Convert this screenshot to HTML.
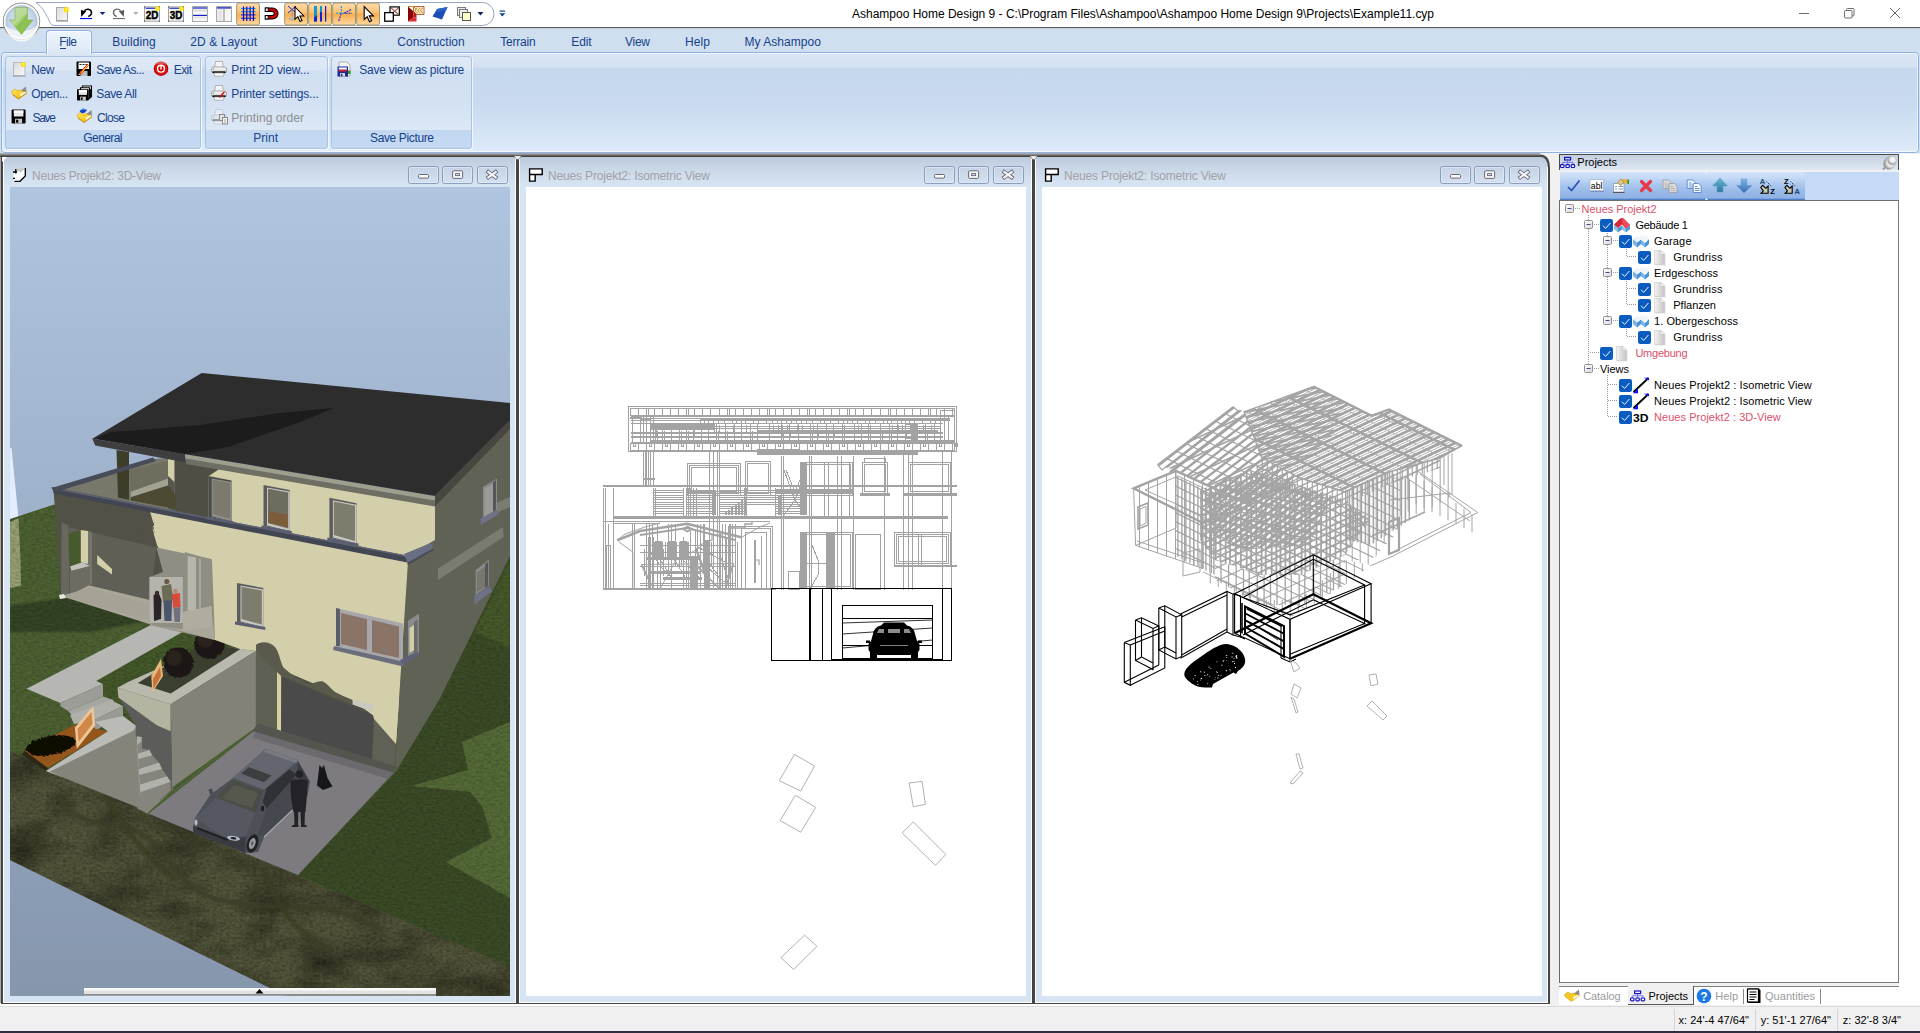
<!DOCTYPE html>
<html><head><meta charset="utf-8"><title>Ashampoo Home Design 9</title>
<style>
html,body{margin:0;padding:0;width:1920px;height:1033px;overflow:hidden;background:#f0f0f0;
font-family:"Liberation Sans",sans-serif;}
div{box-sizing:border-box;}
.a{position:absolute;}
.t{position:absolute;white-space:pre;}
svg{position:absolute;overflow:visible;}

</style></head>
<body>
<svg width="1920" height="153" style="left:0;top:0" viewBox="0 0 1920 153">
<defs>
<linearGradient id="qhl" x1="0" y1="0" x2="0" y2="1"><stop offset="0" stop-color="#fcdcb0"/><stop offset=".45" stop-color="#fbc070"/><stop offset=".5" stop-color="#f9ad50"/><stop offset="1" stop-color="#fdd9a0"/></linearGradient>
<radialGradient id="orb" cx=".5" cy=".5" r=".5"><stop offset="0" stop-color="#dfe9f6"/><stop offset=".7" stop-color="#c4d4ea"/><stop offset=".88" stop-color="#aebfd8"/><stop offset=".95" stop-color="#f4f6f8"/><stop offset="1" stop-color="#9a9a9a"/></radialGradient>
<linearGradient id="orbhi" x1="0" y1="0" x2="0" y2="1"><stop offset="0" stop-color="#fff" stop-opacity=".9"/><stop offset="1" stop-color="#fff" stop-opacity="0"/></linearGradient>
<linearGradient id="garr" x1="0" y1="0" x2="1" y2="1"><stop offset="0" stop-color="#b6d98e"/><stop offset=".5" stop-color="#a5d07a"/><stop offset=".5" stop-color="#8cc152"/><stop offset="1" stop-color="#8fc456"/></linearGradient>
<linearGradient id="pg" x1="0" y1="0" x2="1" y2="1"><stop offset="0" stop-color="#dcdcdc"/><stop offset="1" stop-color="#f6f6f6"/></linearGradient>
</defs>
<rect x="0" y="0" width="1920" height="27" fill="#fff"/>
<rect x="0" y="27" width="1920" height="1.4" fill="#5a5a5a"/>
<rect x="0" y="28.4" width="1920" height="124.600" fill="#d0dff0"/>
<path d="M36 2.5 H482.5 a11.5 11.5 0 0 1 0 23 H54 C48 25.5 49 12 36 2.5 Z" fill="#fff" stroke="#9aa7c4" stroke-width="1"/>
<circle cx="21.5" cy="21.3" r="18.6" fill="url(#orb)"/>
<circle cx="21.5" cy="21.3" r="18.2" fill="none" stroke="#8e8e8e" stroke-width=".9"/><circle cx="21.5" cy="21.3" r="16.800" fill="none" stroke="#fff" stroke-width="1.600" opacity=".85"/><path d="M6 26 a15.500 15.500 0 0 0 31 0 a20 14 0 0 1 -31 0z" fill="#fff" opacity=".75"/>
<path d="M15 7.5 H27.5 V20 H33 L21.5 34.5 L9.5 20 H15 Z" fill="url(#garr)" stroke="#7fae4e" stroke-width=".6"/>
<path d="M15.5 8 H27 V12 L13 26 L10.5 20.5 H15.5Z" fill="#fff" opacity=".18"/>
<rect x="236.7" y="3" width="22.800" height="22" rx="2.200" fill="url(#qhl)" stroke="#a09468"/>
<rect x="284.7" y="3" width="22.800" height="22" rx="2.200" fill="url(#qhl)" stroke="#a09468"/>
<rect x="308.7" y="3" width="22.800" height="22" rx="2.200" fill="url(#qhl)" stroke="#a09468"/>
<rect x="332.7" y="3" width="22.800" height="22" rx="2.200" fill="url(#qhl)" stroke="#a09468"/>
<rect x="356.7" y="3" width="22.800" height="22" rx="2.200" fill="url(#qhl)" stroke="#a09468"/>
<g transform="translate(56,6)"><rect x=".5" y="1.5" width="11" height="13" fill="url(#pg)" stroke="#a9a9a9"/><path d="M0 15.2H12" stroke="#8f8f8f" stroke-width=".8"/><circle cx="10.3" cy="3.700" r="2.6" fill="#ffe100"/><circle cx="10.6" cy="3.300" r=".9" fill="#fff6a0"/></g>
<path d="M84.500 10.600 C87.500 7.800 91.800 9.500 91.500 13 C91.300 15 90 16 88.300 16.500" fill="none" stroke="#000" stroke-width="1.500"/><path d="M80.900 10 L86.200 11.200 L81.200 16.900 Z" fill="#000"/><rect x="80" y="18" width="12" height="1.100" fill="#0000ff"/>
<path d="M99.700 12.100 h5.600 l-2.800 3z" fill="#0a2a8a"/>
<path d="M120.500 10.600 C117.500 7.800 113.200 9.500 113.500 13 C113.700 15 115 16 116.700 16.500" fill="none" stroke="#6a6a6a" stroke-width="1.400"/><path d="M124.100 10 L118.800 11.200 L123.800 16.900 Z" fill="#5a5a5a"/><rect x="113" y="18" width="12" height="1.100" fill="#6e6e6e"/>
<path d="M133 12.100 h5.600 l-2.800 3z" fill="#b0b0b0"/>
<g transform="translate(144,6)"><rect x=".5" y=".9" width="15" height="14.300" fill="#f4f4f4" stroke="#a4a4a4"/><rect x="0" y=".4" width="1.200" height="1.200" fill="#555"/><rect x="14.800" y=".4" width="1.200" height="1.200" fill="#555"/><rect x="0" y="14.500" width="1.200" height="1.200" fill="#555"/><rect x="14.800" y="14.500" width="1.200" height="1.200" fill="#555"/><rect x="1.500" y="1.700" width="10" height="1.100" fill="#1428c8"/><circle cx="13.500" cy="2.700" r="2.400" fill="#ffe100"/><circle cx="13.700" cy="2.300" r=".8" fill="#fff8a0"/><text x="8.100" y="12.900" font-family="Liberation Sans,sans-serif" font-weight="bold" font-size="10.600" text-anchor="middle" fill="#000" stroke="#000" stroke-width=".45" textLength="12.600" lengthAdjust="spacingAndGlyphs">2D</text></g>
<g transform="translate(168,6)"><rect x=".5" y=".9" width="15" height="14.300" fill="#f4f4f4" stroke="#a4a4a4"/><rect x="0" y=".4" width="1.200" height="1.200" fill="#555"/><rect x="14.800" y=".4" width="1.200" height="1.200" fill="#555"/><rect x="0" y="14.500" width="1.200" height="1.200" fill="#555"/><rect x="14.800" y="14.500" width="1.200" height="1.200" fill="#555"/><rect x="1.500" y="1.700" width="10" height="1.100" fill="#1428c8"/><circle cx="13.500" cy="2.700" r="2.400" fill="#ffe100"/><circle cx="13.700" cy="2.300" r=".8" fill="#fff8a0"/><text x="8.100" y="12.900" font-family="Liberation Sans,sans-serif" font-weight="bold" font-size="10.600" text-anchor="middle" fill="#000" stroke="#000" stroke-width=".45" textLength="12.600" lengthAdjust="spacingAndGlyphs">3D</text></g>
<g transform="translate(192,6)"><rect x=".5" y=".5" width="15" height="15" fill="#f6f6f6" stroke="#a8a8a8"/><rect x="1" y="1.400" width="14" height="1.200" fill="#1420c0"/><rect x="1" y="8.800" width="14" height="1.200" fill="#1420c0"/><rect x="1" y="3.5" width="14" height="2" fill="#dcdcdc"/><rect x="1" y="10.5" width="14" height="2" fill="#e4e4e4"/></g>
<g transform="translate(216,6)"><rect x=".5" y=".5" width="15" height="15" fill="#f6f6f6" stroke="#a8a8a8"/><rect x="1" y="1.2" width="14" height="1.4" fill="#1f2fbf"/><rect x="7.4" y="3" width="1.2" height="12.5" fill="#9a9a9a"/><rect x="1.5" y="3" width="5" height="12" fill="#e6e6e6"/></g>
<g><path d="M241 8.5H255.500" stroke="#0a96d8" stroke-width="1.200"/><path d="M241 11.7H255.500" stroke="#0a96d8" stroke-width="1.200"/><path d="M241 14.9H255.500" stroke="#1a3ad8" stroke-width="1.200"/><path d="M241 18.3H255.500" stroke="#1a3ad8" stroke-width="1.200"/><path d="M243.5 6.500V21" stroke="#0a0ac8" stroke-width="1.200"/><path d="M246.8 6.500V21" stroke="#0a0ac8" stroke-width="1.200"/><path d="M250.1 6.500V21" stroke="#0a0ac8" stroke-width="1.200"/><path d="M253.4 6.500V21" stroke="#0a0ac8" stroke-width="1.200"/></g>
<g transform="translate(264,6)"><path d="M1.5 2 H8.5 a5.5 5.5 0 0 1 0 11 H1.5 V9.6 H8.2 a2 2 0 0 0 0 -4.2 H1.5 Z" fill="#d40000" stroke="#000" stroke-width="1.1"/><rect x="1.2" y="2" width="3" height="3.4" fill="#fff" stroke="#000" stroke-width="1"/><rect x="1.2" y="9.6" width="3" height="3.4" fill="#fff" stroke="#000" stroke-width="1"/></g>
<g><path d="M288 6 L296 13 M296 6 L288 13" stroke="#1a1ad0" stroke-width="1"/><path d="M292 8 V21 M289 19h6" stroke="#8a8a8a" stroke-width="1"/><path d="M291 14 l3 6 h-4z" fill="#b8b8b8"/></g>
<path transform="translate(295,7) scale(0.95)" d="M0 0 V13 L3 10.2 L5.3 15.2 L7.4 14.2 L5.1 9.4 H9.2 Z" fill="#fff" stroke="#000" stroke-width="1.1" stroke-linejoin="miter"/>
<g><rect x="314" y="6" width="2.900" height="15.600" fill="#0a96d8"/><path d="M314 21.600 v-4 l2.900 -2.600 v6.600z" fill="#1420d0"/><rect x="320" y="6" width="2" height="15.600" fill="#1420d0"/><rect x="320" y="6" width="2" height="6" fill="#0a96d8"/><rect x="325" y="6" width="1.200" height="15.600" fill="#1420d0"/></g>
<g fill="none" stroke-width="1.100" stroke-dasharray="2 1"><path d="M341.300 6 V13" stroke="#0a96d8"/><path d="M336 13.300 H345" stroke="#0a96d8"/><path d="M341.300 13.500 L338.500 21.500" stroke="#1420d0"/><path d="M344 13.300 L351 9.500" stroke="#1420d0"/><path d="M345.500 13.300 H352" stroke="#1420d0"/></g>
<path transform="translate(364.2,6.5) scale(1.0)" d="M0 0 V13 L3 10.2 L5.3 15.2 L7.4 14.2 L5.1 9.4 H9.2 Z" fill="#fff" stroke="#000" stroke-width="1.1" stroke-linejoin="miter"/>
<g><rect x="390" y="6.900" width="9.300" height="8.300" fill="#fff" stroke="#000" stroke-width="1.200"/><path d="M391 7.800 l7.500 6.500 M398.500 7.800 l-7.500 6.500" stroke="#a0503a" stroke-width="1.100"/><rect x="384.700" y="12.600" width="8.600" height="8.600" fill="#fff" stroke="#000" stroke-width="1.300"/></g>
<g><path d="M413.500 6.500 H424 V14.500 H416.500 L413.500 11.500Z" fill="#fff6e8" stroke="#b05030" stroke-width=".9"/><path d="M408 6.500 H413.500 L416.500 9.500" fill="none" stroke="#c89020" stroke-width="1"/><path d="M417.500 7.500 l-2.500 3 2.500 3 M420.300 7.500 l-2.500 3 2.500 3 M423 7.500 l-2.500 3 2.500 3" stroke="#d09820" stroke-width="1.100" fill="none"/><path d="M408 6.500 L413.500 11.500 V17.500 L408 21.500Z" fill="#8c0000"/><path d="M408 21.500 L413.500 17.500 H416.500 V21.500Z" fill="#d83030"/><path d="M413.500 11.500 L416.500 14.500 V17.500 H413.500Z" fill="#c01818"/></g>
<path d="M437 9 L447.5 7 L442 19.5 L432.5 16.5 Z" fill="#1c4fb0"/><path d="M437 9 L447.5 7 L446 10.5 L436 12Z" fill="#2a63c8"/>
<g stroke="#7a7a7a" stroke-width="1"><rect x="457.5" y="7.5" width="8" height="8" fill="#e8e8e8"/><rect x="459.5" y="9.5" width="8" height="8" fill="#efefef"/><rect x="462.5" y="12.5" width="8" height="8" fill="#ffffc8" stroke="#555"/></g>
<path d="M477.500 12 h6 l-3 3.400z" fill="#0a246a"/>
<rect x="499.500" y="10.5" width="5.500" height="1.2" fill="#15428b"/><path d="M499.3 13.3 h6 l-3 3.2z" fill="#15428b"/>
<g stroke="#6b6b6b" stroke-width="1" fill="none"><path d="M1799 13.5 H1809"/><rect x="1844.500" y="10.500" width="7.500" height="7.500" rx="1"/><path d="M1846.500 10.500 V9.5 a1 1 0 0 1 1 -1 H1853 a1 1 0 0 1 1 1 V15 a1 1 0 0 1 -1 1 H1852"/><path d="M1890 8 L1900 18 M1900 8 L1890 18"/></g>
</svg><div class="t" style="left:852.0px;top:6.3px;font-size:12px;line-height:16px;letter-spacing:-0.007px;color:#000;">Ashampoo Home Design 9 - C:\Program Files\Ashampoo\Ashampoo Home Design 9\Projects\Example11.cyp</div>
<div class="a" style="left:0.5px;top:52px;width:1918px;height:101px;border:1px solid #8db2e3;border-radius:4px;background:linear-gradient(#dbe6f4 0px,#d4e1f2 14px,#c6d8ee 15px,#c9daf0 50px,#dbe9f8 96px,#e6f0fb 100px);"></div>
<div class="a" style="left:1.5px;top:53px;width:1916px;height:99px;border:1px solid rgba(255,255,255,.55);border-radius:3px;"></div>
<div class="a" style="left:45.500px;top:29.5px;width:46px;height:24px;border:1px solid #8db2e3;border-bottom:none;border-radius:4px 4px 0 0;background:linear-gradient(#eef4fb,#e4edf8 60%,#dbe6f4);box-shadow:inset 1px 1px 0 rgba(255,255,255,.8),inset -1px 0 0 rgba(255,255,255,.8);"></div>
<div class="t" style="left:59.3px;top:33.6px;font-size:12px;line-height:16px;letter-spacing:-0.545px;color:#15428b;">File</div>
<div class="t" style="left:112.3px;top:33.6px;font-size:12px;line-height:16px;letter-spacing:0.100px;color:#15428b;">Building</div>
<div class="t" style="left:190.3px;top:33.6px;font-size:12px;line-height:16px;letter-spacing:0.066px;color:#15428b;">2D &amp; Layout</div>
<div class="t" style="left:292.3px;top:33.6px;font-size:12px;line-height:16px;letter-spacing:-0.091px;color:#15428b;">3D Functions</div>
<div class="t" style="left:397.3px;top:33.6px;font-size:12px;line-height:16px;letter-spacing:0.003px;color:#15428b;">Construction</div>
<div class="t" style="left:500.3px;top:33.6px;font-size:12px;line-height:16px;letter-spacing:-0.213px;color:#15428b;">Terrain</div>
<div class="t" style="left:571.3px;top:33.6px;font-size:12px;line-height:16px;letter-spacing:-0.159px;color:#15428b;">Edit</div>
<div class="t" style="left:625.1px;top:33.6px;font-size:12px;line-height:16px;letter-spacing:-0.331px;color:#15428b;">View</div>
<div class="t" style="left:685.1px;top:33.6px;font-size:12px;line-height:16px;letter-spacing:0.040px;color:#15428b;">Help</div>
<div class="t" style="left:744.4px;top:33.6px;font-size:12px;line-height:16px;letter-spacing:0.046px;color:#15428b;">My Ashampoo</div>
<div class="a" style="left:59.500px;top:48px;width:6.500px;height:1px;background:#15428b"></div>
<div class="a" style="left:4.5px;top:55.5px;width:196.0px;height:93px;border:1px solid #a9c3e3;border-radius:3px;background:linear-gradient(#e0eaf6 0px,#dbe6f4 13px,#d1dff2 15px,#d3e1f3 45px,#dce8f6 73px,#c2d8f1 73.500px,#c4daf3 93px);box-shadow:1px 1px 0 rgba(255,255,255,.7);"></div><div class="t" style="left:83.3px;top:130.2px;font-size:12px;line-height:16px;letter-spacing:-0.582px;color:#15428b;">General</div>
<div class="a" style="left:204.5px;top:55.5px;width:123.0px;height:93px;border:1px solid #a9c3e3;border-radius:3px;background:linear-gradient(#e0eaf6 0px,#dbe6f4 13px,#d1dff2 15px,#d3e1f3 45px,#dce8f6 73px,#c2d8f1 73.500px,#c4daf3 93px);box-shadow:1px 1px 0 rgba(255,255,255,.7);"></div><div class="t" style="left:253.3px;top:130.2px;font-size:12px;line-height:16px;letter-spacing:0.007px;color:#15428b;">Print</div>
<div class="a" style="left:331.3px;top:55.5px;width:141.2px;height:93px;border:1px solid #a9c3e3;border-radius:3px;background:linear-gradient(#e0eaf6 0px,#dbe6f4 13px,#d1dff2 15px,#d3e1f3 45px,#dce8f6 73px,#c2d8f1 73.500px,#c4daf3 93px);box-shadow:1px 1px 0 rgba(255,255,255,.7);"></div><div class="t" style="left:370.0px;top:130.2px;font-size:12px;line-height:16px;letter-spacing:-0.367px;color:#15428b;">Save Picture</div>
<div class="t" style="left:31.3px;top:61.5px;font-size:12px;line-height:16px;letter-spacing:-0.403px;color:#15428b;">New</div>
<div class="t" style="left:96.3px;top:61.5px;font-size:12px;line-height:16px;letter-spacing:-0.648px;color:#15428b;">Save As...</div>
<div class="t" style="left:173.8px;top:61.5px;font-size:12px;line-height:16px;letter-spacing:-0.601px;color:#15428b;">Exit</div>
<div class="t" style="left:231.3px;top:61.5px;font-size:12px;line-height:16px;letter-spacing:-0.122px;color:#15428b;">Print 2D view...</div>
<div class="t" style="left:359.3px;top:61.5px;font-size:12px;line-height:16px;letter-spacing:-0.266px;color:#15428b;">Save view as picture</div>
<div class="t" style="left:31.3px;top:85.5px;font-size:12px;line-height:16px;letter-spacing:-0.443px;color:#15428b;">Open...</div>
<div class="t" style="left:96.3px;top:85.5px;font-size:12px;line-height:16px;letter-spacing:-0.408px;color:#15428b;">Save All</div>
<div class="t" style="left:231.3px;top:85.5px;font-size:12px;line-height:16px;letter-spacing:-0.141px;color:#15428b;">Printer settings...</div>
<div class="t" style="left:32.5px;top:109.5px;font-size:12px;line-height:16px;letter-spacing:-1.284px;color:#15428b;">Save</div>
<div class="t" style="left:97.0px;top:109.5px;font-size:12px;line-height:16px;letter-spacing:-0.670px;color:#15428b;">Close</div>
<div class="t" style="left:231.3px;top:109.5px;font-size:12px;line-height:16px;letter-spacing:0.051px;color:#8d8d8d;">Printing order</div>
<svg width="480" height="100" style="left:0;top:52px" viewBox="0 52 480 100">
<defs><linearGradient id="pg2" x1="0" y1="0" x2="1" y2="1"><stop offset="0" stop-color="#d8d8d8"/><stop offset="1" stop-color="#fafafa"/></linearGradient>
<linearGradient id="fol" x1="0" y1="0" x2="1" y2="1"><stop offset="0" stop-color="#ffe45a"/><stop offset="1" stop-color="#f2b800"/></linearGradient>
<linearGradient id="prn" x1="0" y1="0" x2="0" y2="1"><stop offset="0" stop-color="#fdfdfd"/><stop offset="1" stop-color="#cfcfcf"/></linearGradient>
</defs>
<g transform="translate(13,61.5)"><rect x=".5" y="1" width="11.500" height="13" fill="url(#pg2)" stroke="#b0b0b0" stroke-width=".8"/><path d="M0 14.600H12.500" stroke="#9a9a9a"/><circle cx="10.300" cy="3" r="2.500" fill="#ffe100"/><circle cx="10.600" cy="2.600" r=".9" fill="#fff8b0"/></g>
<g transform="translate(11,86)"><path d="M8 6 L15 0.500 L15.500 6.500 L9 11Z" fill="#8a8a8a"/><path d="M0.500 5.500 L4 3 L7 5 L9 4 L15.500 6.500 L7.500 12.500 L1.500 8Z" fill="url(#fol)" stroke="#c89600" stroke-width=".5"/><path d="M7.500 12.500 L15.500 6.500 L15.500 7.800 L7.500 13.500 L1.500 9 V8Z" fill="#c49000"/><path d="M9 8 L14.500 5.500 L14.800 7 L9.500 10.500Z" fill="#fff" opacity=".85"/></g>
<g transform="translate(11.6,109.5) scale(1.000,1.000)"><rect x="0" y="0" width="14" height="14" rx="1" fill="#000"/><rect x="2.200" y="1" width="9.600" height="6" fill="#e8e8e8"/><rect x="2.200" y="1" width="9.600" height="2.500" fill="#fff"/><rect x="3.500" y="9.200" width="7" height="4.800" fill="#c8c8c8"/><rect x="4.500" y="10.200" width="2.200" height="3" fill="#000"/></g>
<g transform="translate(76.5,61.5)"><rect x="0" y="0" width="14.500" height="14.500" rx="1" fill="#000"/><rect x="2" y="1" width="10.500" height="6.500" fill="#fff"/><path d="M3 3h2M6 3h2M9 3h2" stroke="#000" stroke-width=".9"/><rect x="4" y="9.500" width="7" height="5" fill="#bdbdbd"/><path d="M2.500 12 L10.500 2.500 L12.300 4 L4.500 13.200Z" fill="#e01010"/><path d="M3.800 11.500 L10.800 3.200 L11.600 3.900 L4.600 12.200Z" fill="#ffd21c"/><path d="M2 13.500 L2.500 12 L4.500 13.200Z" fill="#f4e0b0"/></g>
<g><path d="M82.500 86 h9 v10.500 h-9z" fill="#fff" stroke="#000" stroke-width="1.100"/><path d="M80.500 87.800 h9 v10.500 h-9z" fill="#fff" stroke="#000" stroke-width="1.100"/><path d="M89 99.500 l3 -2.500 v-9 l-3 2z" fill="#000"/></g>
<g transform="translate(77,89.3) scale(0.843,0.800)"><rect x="0" y="0" width="14" height="14" rx="1" fill="#000"/><rect x="2.200" y="1" width="9.600" height="6" fill="#e8e8e8"/><rect x="2.200" y="1" width="9.600" height="2.500" fill="#fff"/><rect x="3.500" y="9.200" width="7" height="4.800" fill="#c8c8c8"/><rect x="4.500" y="10.200" width="2.200" height="3" fill="#000"/></g>
<path d="M79.500 111 l3.500 -2.500 4 1.500 -2 2.500 -3.500 1z" fill="#1a3fd0"/><path d="M81 109.800 l2.500 -1.300 3.500 1.500z" fill="#3aa8e0"/>
<g transform="translate(76.5,109.5)"><path d="M8 6 L15 0.500 L15.500 6.500 L9 11Z" fill="#8a8a8a"/><path d="M0.500 5.500 L4 3 L7 5 L9 4 L15.500 6.500 L7.500 12.500 L1.500 8Z" fill="url(#fol)" stroke="#c89600" stroke-width=".5"/><path d="M7.500 12.500 L15.500 6.500 L15.500 7.800 L7.500 13.500 L1.500 9 V8Z" fill="#c49000"/><path d="M9 8 L14.500 5.500 L14.800 7 L9.500 10.500Z" fill="#fff" opacity=".85"/></g>
<g><circle cx="161" cy="68.700" r="7.300" fill="#c80000"/><circle cx="161" cy="68.700" r="6" fill="#e01818"/><circle cx="161" cy="68.700" r="4.100" fill="#fff"/><circle cx="161" cy="68.700" r="2.700" fill="#d80000"/><rect x="160.300" y="65.500" width="1.400" height="4" fill="#fff"/><path d="M155 65 a7 7 0 0 1 12 0 a9 6 0 0 0 -12 0z" fill="#fff" opacity=".35"/></g>
<g transform="translate(211,61)"><path d="M4.500 0.500 h7 l.8 6 h-8.600z" fill="#f4f4f4" stroke="#9a9a9a" stroke-width=".7"/><rect x=".5" y="6" width="15" height="6" rx="2.200" fill="url(#prn)" stroke="#8a8a8a" stroke-width=".8"/><rect x="1.500" y="10.300" width="13" height="1.700" fill="#111"/><path d="M3 12 h10 l-.5 3.200 h-9z" fill="#fafafa" stroke="#9a9a9a" stroke-width=".7"/><rect x="2" y="7.600" width="1.200" height="1" fill="#3a3"/></g>
<g transform="translate(211,85)"><path d="M4.500 0.500 h7 l.8 6 h-8.600z" fill="#f4f4f4" stroke="#9a9a9a" stroke-width=".7"/><rect x=".5" y="6" width="15" height="6" rx="2.200" fill="url(#prn)" stroke="#8a8a8a" stroke-width=".8"/><rect x="1.500" y="10.300" width="13" height="1.700" fill="#111"/><path d="M3 12 h10 l-.5 3.200 h-9z" fill="#fafafa" stroke="#9a9a9a" stroke-width=".7"/><rect x="2" y="7.600" width="1.200" height="1" fill="#3a3"/></g>
<path d="M219 97 L224 91 L225.200 92 L220 98Z" fill="#d01010"/><path d="M221 91 l3 -1 1 1.500z" fill="#e8d8c0"/>
<g transform="translate(211,109)" opacity=".45"><path d="M4.500 0.500 h7 l.8 6 h-8.600z" fill="#f4f4f4" stroke="#9a9a9a" stroke-width=".7"/><rect x=".5" y="6" width="15" height="6" rx="2.200" fill="url(#prn)" stroke="#8a8a8a" stroke-width=".8"/><rect x="1.500" y="10.300" width="13" height="1.700" fill="#111"/><path d="M3 12 h10 l-.5 3.200 h-9z" fill="#fafafa" stroke="#9a9a9a" stroke-width=".7"/><rect x="2" y="7.600" width="1.200" height="1" fill="#3a3"/></g>
<g stroke="#8a8a8a" stroke-width="1" fill="#e4e4e4"><rect x="219.500" y="114.500" width="5" height="6"/><rect x="222.500" y="117.500" width="5" height="6.500" fill="#f4f4f4"/><path d="M224 120h2M224 122h2" stroke-width=".8"/></g>
<g transform="translate(337.500,61.500)"><path d="M1.500 .5 h8 l3 3 v11 h-11z" fill="#f4f4f4" stroke="#a0a0a0" stroke-width=".8"/><rect x="0" y="5" width="10.500" height="10" fill="#1a2a9a"/><rect x="1.300" y="6" width="8" height="2.200" fill="#fff"/><rect x="1.300" y="8.200" width="8" height="1.800" fill="#e02020"/><rect x="2.500" y="11.500" width="5" height="3.500" fill="#dcdcdc"/><rect x="3.300" y="12.300" width="1.600" height="2.700" fill="#1a2a9a"/><rect x="10.500" y="9" width="2.500" height="3.500" fill="#2a9a2a"/></g>
</svg>
<div class="a" style="left:0;top:152.8px;width:1543px;height:4px;background:linear-gradient(#b9b9b9,#8a8a8a 40%,#4a4a4a 75%,#3c3c3c);"></div>
<div class="a" style="left:0;top:157px;width:1550px;height:848px;background:#fff;"></div>
<div class="a" style="left:0;top:157px;width:1px;height:846px;background:#a6a6a6;"></div>
<div class="a" style="left:4px;top:157px;width:511px;height:845px;background:linear-gradient(#bccbdc 0px,#c6d4e5 8px,#d3e1f0 24px,#d6e4f3 30px,#d6e4f3 100%);"></div><div class="t" style="left:32.0px;top:168.2px;font-size:12px;line-height:16px;letter-spacing:-0.220px;color:#a3a1a3;">Neues Projekt2: 3D-View</div><div class="a" style="left:408.3px;top:166.2px;width:31px;height:17.5px;border:1px solid #8c9dc0;border-radius:2.5px;background:linear-gradient(#c5d3e5,#d4e1f0);box-shadow:inset 0 0 0 1px rgba(230,238,248,.6);"></div><div class="a" style="left:442.4px;top:166.2px;width:31px;height:17.5px;border:1px solid #8c9dc0;border-radius:2.5px;background:linear-gradient(#c5d3e5,#d4e1f0);box-shadow:inset 0 0 0 1px rgba(230,238,248,.6);"></div><div class="a" style="left:476.5px;top:166.2px;width:31px;height:17.5px;border:1px solid #8c9dc0;border-radius:2.5px;background:linear-gradient(#c5d3e5,#d4e1f0);box-shadow:inset 0 0 0 1px rgba(230,238,248,.6);"></div>
<div class="a" style="left:520px;top:157px;width:511px;height:845px;background:linear-gradient(#bccbdc 0px,#c6d4e5 8px,#d3e1f0 24px,#d6e4f3 30px,#d6e4f3 100%);"></div><div class="t" style="left:548.0px;top:168.2px;font-size:12px;line-height:16px;letter-spacing:-0.156px;color:#a3a1a3;">Neues Projekt2: Isometric View</div><div class="a" style="left:924.3px;top:166.2px;width:31px;height:17.5px;border:1px solid #8c9dc0;border-radius:2.5px;background:linear-gradient(#c5d3e5,#d4e1f0);box-shadow:inset 0 0 0 1px rgba(230,238,248,.6);"></div><div class="a" style="left:958.4px;top:166.2px;width:31px;height:17.5px;border:1px solid #8c9dc0;border-radius:2.5px;background:linear-gradient(#c5d3e5,#d4e1f0);box-shadow:inset 0 0 0 1px rgba(230,238,248,.6);"></div><div class="a" style="left:992.5px;top:166.2px;width:31px;height:17.5px;border:1px solid #8c9dc0;border-radius:2.5px;background:linear-gradient(#c5d3e5,#d4e1f0);box-shadow:inset 0 0 0 1px rgba(230,238,248,.6);"></div>
<div class="a" style="left:1036px;top:157px;width:511px;height:845px;background:linear-gradient(#bccbdc 0px,#c6d4e5 8px,#d3e1f0 24px,#d6e4f3 30px,#d6e4f3 100%);"></div><div class="t" style="left:1064.0px;top:168.2px;font-size:12px;line-height:16px;letter-spacing:-0.156px;color:#a3a1a3;">Neues Projekt2: Isometric View</div><div class="a" style="left:1440.3px;top:166.2px;width:31px;height:17.5px;border:1px solid #8c9dc0;border-radius:2.5px;background:linear-gradient(#c5d3e5,#d4e1f0);box-shadow:inset 0 0 0 1px rgba(230,238,248,.6);"></div><div class="a" style="left:1474.4px;top:166.2px;width:31px;height:17.5px;border:1px solid #8c9dc0;border-radius:2.5px;background:linear-gradient(#c5d3e5,#d4e1f0);box-shadow:inset 0 0 0 1px rgba(230,238,248,.6);"></div><div class="a" style="left:1508.5px;top:166.2px;width:31px;height:17.5px;border:1px solid #8c9dc0;border-radius:2.5px;background:linear-gradient(#c5d3e5,#d4e1f0);box-shadow:inset 0 0 0 1px rgba(230,238,248,.6);"></div>
<div class="a" style="left:1px;top:157px;width:2px;height:847px;background:#454545;"></div>
<div class="a" style="left:516px;top:157px;width:3px;height:847px;background:#454545;"></div>
<div class="a" style="left:1032px;top:157px;width:3px;height:847px;background:#454545;"></div>
<div class="a" style="left:1548px;top:166px;width:2px;height:838px;background:#454545;"></div>
<div class="a" style="left:1px;top:1003px;width:1549px;height:1px;background:#454545;"></div>
<div class="a" style="left:526px;top:187px;width:500px;height:809px;background:#fff;"></div>
<div class="a" style="left:1042px;top:187px;width:500px;height:809px;background:#fff;"></div>
<svg width="1560" height="40" style="left:0;top:153px" viewBox="0 153 1560 40">
<rect x="418.5" y="174.500" width="10" height="3.600" rx="1" fill="#fafafa" stroke="#686878" stroke-width="1"/>
<rect x="452.6" y="170.800" width="10" height="7.600" rx="1" fill="#f6f6f6" stroke="#686878" stroke-width="1"/><rect x="455.6" y="173.600" width="4" height="2" fill="#d6e0ee" stroke="#686878" stroke-width=".9"/>
<path d="M488.3 172.0 L495.7 177.39999999999998 M495.7 172.0 L488.3 177.39999999999998" stroke="#60607a" stroke-width="3.800" stroke-linecap="square"/><path d="M488.3 172.0 L495.7 177.39999999999998 M495.7 172.0 L488.3 177.39999999999998" stroke="#f4f4f4" stroke-width="2.200" stroke-linecap="square"/>
<rect x="934.5" y="174.500" width="10" height="3.600" rx="1" fill="#fafafa" stroke="#686878" stroke-width="1"/>
<rect x="968.6" y="170.800" width="10" height="7.600" rx="1" fill="#f6f6f6" stroke="#686878" stroke-width="1"/><rect x="971.6" y="173.600" width="4" height="2" fill="#d6e0ee" stroke="#686878" stroke-width=".9"/>
<path d="M1004.3 172.0 L1011.7 177.39999999999998 M1011.7 172.0 L1004.3 177.39999999999998" stroke="#60607a" stroke-width="3.800" stroke-linecap="square"/><path d="M1004.3 172.0 L1011.7 177.39999999999998 M1011.7 172.0 L1004.3 177.39999999999998" stroke="#f4f4f4" stroke-width="2.200" stroke-linecap="square"/>
<rect x="1450.5" y="174.500" width="10" height="3.600" rx="1" fill="#fafafa" stroke="#686878" stroke-width="1"/>
<rect x="1484.6" y="170.800" width="10" height="7.600" rx="1" fill="#f6f6f6" stroke="#686878" stroke-width="1"/><rect x="1487.6" y="173.600" width="4" height="2" fill="#d6e0ee" stroke="#686878" stroke-width=".9"/>
<path d="M1520.3 172.0 L1527.7 177.39999999999998 M1527.7 172.0 L1520.3 177.39999999999998" stroke="#60607a" stroke-width="3.800" stroke-linecap="square"/><path d="M1520.3 172.0 L1527.7 177.39999999999998 M1527.7 172.0 L1520.3 177.39999999999998" stroke="#f4f4f4" stroke-width="2.200" stroke-linecap="square"/>
<path d="M513.7 155.800 h8 l-3 3.600 h-2z" fill="#fff" stroke="#4a4a4a" stroke-width=".6"/>
<path d="M1029.7 155.800 h8 l-3 3.600 h-2z" fill="#fff" stroke="#4a4a4a" stroke-width=".6"/>
<path d="M2 157 h5 l-5 5z" fill="#fff"/>
<path d="M1540 153 h11 v14 h-2.300 q0 -10 -8.700 -10.500z" fill="#f0f0f0"/><path d="M1540 155.600 q8.700 .3 8.700 11.400" fill="none" stroke="#454545" stroke-width="2.200"/>
<g transform="translate(12,168)"><path d="M4.500 0.500 H13 L8 5.500 H4.500Z" fill="#c8c8c8"/><path d="M8 5.500 L13 0.500 V8 L8 13Z" fill="#fff"/><rect x="1.500" y="3.500" width="6.500" height="9.500" fill="#fff"/><path d="M13.300 0 V8 L8 13.300 H2.500" fill="none" stroke="#000" stroke-width="1.300"/><path d="M1 4 h4 M3.800 1 v4.500 M1 10.300 h2" stroke="#000" stroke-width="1.300"/></g>
<path d="M529.6 168.900 h12.600 v5.600 h-7 v6.600 h-5.600z M529.6 174.500 h6" fill="#fff" stroke="#000" stroke-width="1.400"/>
<path d="M1045.6 168.900 h12.600 v5.600 h-7 v6.600 h-5.600z M1045.6 174.500 h6" fill="#fff" stroke="#000" stroke-width="1.400"/>
</svg>
<svg width="500" height="809" style="left:10px;top:187px;overflow:hidden" viewBox="10 187 500 809">
<defs>
<linearGradient id="sky" x1="0" y1="0" x2="0" y2="1"><stop offset="0" stop-color="#afc4de"/><stop offset="1" stop-color="#8596ad"/></linearGradient>
<filter id="grassn" x="0" y="0" width="100%" height="100%"><feTurbulence type="fractalNoise" baseFrequency="0.25 0.5" numOctaves="2" seed="4" result="n"/><feColorMatrix in="n" type="matrix" values="0 0 0 0 0  0 0 0 0 0  0 0 0 0 0  0.7 0.7 0 0 -0.52"/><feComposite in2="SourceGraphic" operator="in"/></filter>
<filter id="earthn" x="0" y="0" width="100%" height="100%"><feTurbulence type="fractalNoise" baseFrequency="0.02 0.035" numOctaves="3" seed="9" result="n"/><feColorMatrix in="n" type="matrix" values="0 0 0 0 0  0 0 0 0 0  0 0 0 0 0  1.3 1.0 0 0 -0.95"/><feComposite in2="SourceGraphic" operator="in"/></filter>
<filter id="earthf" x="0" y="0" width="100%" height="100%"><feTurbulence type="fractalNoise" baseFrequency="0.3 0.4" numOctaves="2" seed="3" result="n"/><feColorMatrix in="n" type="matrix" values="0 0 0 0 0  0 0 0 0 0  0 0 0 0 0  0.7 0.7 0 0 -0.5"/><feComposite in2="SourceGraphic" operator="in"/></filter>
<filter id="rough" x="-10%" y="-10%" width="120%" height="120%"><feTurbulence type="fractalNoise" baseFrequency="0.35" numOctaves="2" seed="5" result="t"/><feDisplacementMap in="SourceGraphic" in2="t" scale="3.500" xChannelSelector="R" yChannelSelector="G"/></filter>
<filter id="blur1"><feGaussianBlur stdDeviation="1.2"/></filter>
<filter id="blur2"><feGaussianBlur stdDeviation="3"/></filter>
<filter id="blur05"><feGaussianBlur stdDeviation=".6"/></filter>
<linearGradient id="gl" x1="0" y1="0" x2="1" y2="0"><stop offset="0" stop-color="#5a7a33"/><stop offset="1" stop-color="#4a672a"/></linearGradient>
</defs>
<rect x="10" y="187" width="500" height="809" fill="url(#sky)"/>
<polygon points="10.0,448.0 11.5,448.0 18.5,518.0 10.0,522.0" fill="#e4edff" />
<polygon points="10.0,519.0 53.6,504.7 120.0,520.0 510.0,556.0 510.0,967.0 10.0,752.0" fill="#475a2d" />
<polygon points="10.0,522.0 18.5,518.0 53.6,504.7 62.0,520.0 64.0,600.0 10.0,607.0" fill="#4e6233" />
<polygon points="10.0,522.0 18.5,518.0 20.5,560.0 21.0,586.0 10.0,588.0" fill="#98a274" />
<polygon points="10.0,630.0 150.0,618.0 96.0,681.0 26.5,688.7 60.0,703.0 75.0,724.0 24.5,750.7 10.0,752.0" fill="#4e6233" />
<polygon points="10.0,606.0 62.0,598.0 152.0,601.0 152.0,620.0 90.0,632.0 10.0,632.0" fill="#364525" filter="url(#blur1)"/>
<polygon points="439.0,700.0 510.0,556.0 510.0,967.0 298.0,875.0 395.0,773.0" fill="#3c4c27" />
<polygon points="510.0,722.0 462.0,742.0 468.0,770.0 412.0,786.0 470.0,792.0 482.0,806.0 492.0,838.0 446.0,862.0 510.0,898.0" fill="#576c38" filter="url(#blur05)"/>
<polygon points="510.0,560.0 475.0,632.0 510.0,648.0" fill="#465a2c" filter="url(#blur1)"/>
<polygon points="183.0,632.0 215.0,640.0 128.0,682.0 117.0,688.0 120.0,700.0 103.0,690.0 96.0,681.0" fill="#455a2b" />
<g filter="url(#grassn)" opacity=".4"><polygon points="10,520 53.6,505 120,520 510,556 510,967 10,752" fill="#1c2a0c"/></g>
<polygon points="10.0,751.5 510.0,966.6 510.0,996.0 286.0,996.0 10.0,860.0" fill="#54563b" />
<g filter="url(#earthn)" opacity=".5"><polygon points="10,751.5 510,966.6 510,996 286,996 10,860" fill="#34361f"/></g>
<g filter="url(#earthf)" opacity=".5"><polygon points="10,751.5 510,966.6 510,996 286,996 10,860" fill="#2a2c18"/></g>
<path d="M60 800 C90 840 130 810 160 850 S200 900 250 905 S330 900 380 930" fill="none" stroke="#3c3e26" stroke-width="5" filter="url(#blur1)" opacity=".8"/>
<path d="M105 795 C125 830 140 850 175 880 M262 868 C275 900 290 930 330 950" fill="none" stroke="#3a3c24" stroke-width="5" filter="url(#blur1)" opacity=".8"/>
<polygon points="252.4,729.4 394.6,771.8 298.0,875.0 145.7,812.4" fill="#7d7b7f" />
<polygon points="256.0,730.0 394.6,771.8 388.0,779.0 253.0,738.0" fill="#6c6a6e" filter="url(#blur05)"/>
<polygon points="253.5,728.5 256.0,729.5 147.5,814.5 145.5,813.0" fill="#4a6030" />
<polygon points="151.3,624.8 183.3,631.6 96.2,681.0 103.0,684.0 60.3,703.0 26.5,688.7" fill="#b6b6b2" />
<polygon points="60.3,703.0 103.0,684.0 103.0,696.5 68.0,711.0 60.3,706.0" fill="#9c9c98" />
<polygon points="68.0,711.0 103.0,696.5 113.6,700.0 113.6,708.0 78.0,722.0" fill="#a6a6a0" />
<polygon points="70.0,715.0 95.0,706.0 110.7,700.0 123.0,706.0 90.0,722.0 74.0,724.0" fill="#b0b0aa" />
<polygon points="90.0,722.0 123.0,706.0 123.0,716.0 96.0,730.0" fill="#9a9a94" />
<polygon points="24.5,750.7 74.9,724.5 107.8,731.3 47.8,768.0" fill="#95561c" />
<polygon points="24.5,750.7 47.8,768.0 45.8,771.0 22.0,755.0" fill="#2e2618" />
<polygon points="45.8,771.0 107.8,731.3 95.0,722.0 123.0,716.0 135.8,725.5 135.8,729.4 61.3,776.8" fill="#babab6" />
<polygon points="50.0,771.5 135.8,729.4 139.0,808.0 61.3,776.8" fill="#84847b" />
<g filter="url(#rough)"><ellipse cx="50.700" cy="745.500" rx="25" ry="9.500" fill="#0e0b06" transform="rotate(-10 50.700 745.500)"/></g>
<polygon points="134.5,728.0 172.0,733.0 173.5,789.0 147.0,813.5 137.5,808.5" fill="#85857e" />
<polygon points="118.4,697.0 157.0,725.5 172.0,731.3 172.0,790.0 160.0,800.0 135.8,736.0 135.8,725.5" fill="#5c5c5a" />
<polygon points="136.8,736.2 141.7,737.0 141.7,748.7 137.3,752.0" fill="#aeaea8" />
<polygon points="137.8,753.6 149.4,749.7 152.3,755.5 138.0,767.0" fill="#b2b2ac" />
<polygon points="137.3,745.0 141.7,741.0 141.7,748.7 149.4,749.7 137.8,753.6" fill="#85857e" />
<polygon points="138.7,769.0 159.0,762.3 162.0,769.0 139.0,784.0" fill="#b2b2ac" />
<polygon points="138.0,759.0 152.3,755.5 159.0,762.3 138.7,769.0" fill="#85857e" />
<polygon points="139.7,784.6 166.8,775.9 170.7,781.7 140.7,799.0" fill="#b2b2ac" />
<polygon points="139.0,775.0 162.0,769.0 166.8,775.9 139.7,784.6" fill="#85857e" />
<polygon points="140.7,792.0 170.7,781.7 170.7,790.4 172.6,788.4 146.0,812.0 139.0,808.0" fill="#85857e" />
<polygon points="117.5,687.8 128.0,682.0 211.0,645.0 255.9,651.0 170.7,704.2" fill="#b9b9ad" />
<polygon points="137.8,683.0 203.6,643.0 240.4,649.0 170.7,693.6" fill="#3b3f30" />
<polygon points="117.5,687.8 170.7,704.2 170.7,731.3 157.0,725.5 118.4,697.4" fill="#b4b4a2" />
<polygon points="170.7,704.2 255.9,651.0 255.9,728.4 172.6,788.4" fill="#828278" />
<polygon points="172.6,787.0 255.9,727.4 255.9,729.0 172.6,789.0" fill="#4a6030" />
<g filter="url(#rough)"><circle cx="178.400" cy="662.600" r="15" fill="#1d1912"/><circle cx="209.400" cy="644.200" r="15" fill="#1d1912"/></g>
<circle cx="174" cy="658" r="8" fill="#2a241a" filter="url(#blur1)"/><circle cx="205" cy="640" r="8" fill="#2a241a" filter="url(#blur1)"/>
<polygon points="151.3,676.0 161.0,658.7 163.0,676.0 152.3,692.6" fill="#e6b878" />
<polygon points="153.0,679.0 160.0,667.0 161.0,676.0 153.5,689.0" fill="#c8703c" />
<polygon points="74.9,727.5 93.3,706.0 95.2,725.5 76.8,748.7" fill="#ecc69a" />
<polygon points="77.5,729.0 91.5,712.0 92.5,724.0 78.5,742.0" fill="#d08848" />
<polygon points="435.0,496.0 510.0,420.0 510.0,556.0 439.0,700.0 395.0,773.0 399.0,700.0 408.0,564.0" fill="#616256" />
<polygon points="146.0,509.0 215.0,520.0 215.0,640.0 150.0,625.0" fill="#8e8e82" />
<polygon points="146.6,509.0 408.0,562.0 399.0,700.0 396.0,744.0 352.0,704.0 282.0,676.0 256.0,660.0 255.9,651.0 240.0,649.0 215.0,640.0 212.0,560.0 185.0,552.0 182.8,577.0 163.0,572.0 158.0,549.0" fill="#d3cfaa" />
<polygon points="205.0,463.0 435.0,503.0 435.0,540.0 404.0,558.0 205.0,519.0" fill="#d3cfaa" />
<polygon points="174.3,459.0 220.8,468.0 208.0,476.6 208.0,518.0 174.3,511.0" fill="#4e4e42" />
<polygon points="168.0,458.0 174.3,459.0 174.3,482.0 168.0,476.0" fill="#d3cfa8" />
<polygon points="168.0,476.0 174.3,482.0 174.3,511.0 168.0,509.0" fill="#56564a" />
<polygon points="54.0,490.0 153.0,459.0 168.0,458.0 168.0,511.0 120.0,502.0" fill="#77776a" />
<polygon points="129.0,470.0 168.0,461.0 168.0,478.5 130.8,491.7" fill="#6e6e5e" />
<polygon points="130.8,491.7 168.0,478.5 168.0,485.4 130.8,497.3" fill="#a2a292" />
<polygon points="130.8,497.3 168.0,485.4 175.5,495.4 175.5,509.0 130.8,500.5" fill="#4c4a32" />
<polygon points="116.5,450.0 129.0,452.0 129.0,500.0 118.0,497.5" fill="#3d3d2a" />
<polygon points="53.6,491.0 146.6,509.5 158.0,549.0 163.0,572.0 149.5,577.0 149.9,600.0 89.0,585.3 70.0,595.0 61.0,596.0" fill="#515146" />
<g filter="url(#rough)"><polygon points="144,509 149.500,510 154,525 153,537 160,551 165,573 150,578 140,545" fill="#515146"/></g>
<polygon points="68.4,527.0 156.5,547.5 150.0,600.0 89.0,585.3 70.0,595.0" fill="#5f5f55" />
<polygon points="68.4,533.5 80.8,530.0 80.8,562.3 70.0,566.4" fill="#475a2d" />
<polygon points="80.8,530.0 88.0,531.0 88.0,564.0 80.8,562.3" fill="#d3cfaa" />
<polygon points="88.0,531.0 92.0,532.0 92.0,585.0 88.0,584.0" fill="#75756b" />
<polygon points="70.0,566.4 82.4,562.3 90.0,566.0 72.0,572.0" fill="#c2c2ba" />
<polygon points="70.0,571.0 90.0,566.0 90.0,585.0 70.0,595.0" fill="#6c6c62" />
<polygon points="97.2,554.9 112.0,568.9 112.0,574.6 97.2,563.9" fill="#d3cfa8" />
<polygon points="61.5,522.0 68.4,525.5 69.5,596.0 61.0,596.0" fill="#68685e" />
<polygon points="61.0,596.0 70.0,595.0 89.0,585.3 149.9,600.0 149.9,623.0 153.0,625.6 181.0,629.0 212.4,626.5 212.4,616.6 215.0,640.0 183.3,631.6 151.3,624.8" fill="#aaa69a" />
<polygon points="61.0,596.0 89.0,588.0 150.0,604.0 150.0,620.0" fill="#a6a296" />
<polygon points="59.0,595.0 64.0,594.0 66.0,598.0 60.0,599.0" fill="#e8e8e0" />
<polygon points="156.5,547.5 211.6,559.0 211.6,616.0 182.8,623.0 149.5,623.0 149.5,577.0 163.0,572.0" fill="#8e8e82" />
<polygon points="187.7,556.0 196.0,557.5 196.0,612.0 187.7,614.0" fill="#b6b6aa" />
<polygon points="199.0,558.5 201.0,559.0 201.0,610.0 199.0,611.0" fill="#a8a89c" />
<polygon points="182.8,612.0 211.6,606.0 212.4,626.5 182.8,631.0" fill="#b0aca0" />
<polygon points="149.5,577.0 182.8,577.0 182.8,623.0 149.5,623.0" fill="#b4b4ac" />
<polygon points="153.5,595.0 158.5,592.5 161.5,600.0 161.0,619.0 154.0,621.0" fill="#2a2428" />
<circle cx="157" cy="593" r="2.200" fill="#3a2a28"/>
<polygon points="161.5,586.0 171.0,584.0 173.5,600.0 163.0,602.0" fill="#6c6c54" />
<circle cx="166.800" cy="581.500" r="2.600" fill="#6a5a48"/>
<polygon points="163.5,601.0 172.0,600.0 171.5,621.0 164.5,621.0" fill="#4c566a" />
<polygon points="172.0,594.0 180.0,593.0 180.5,607.0 173.0,608.0" fill="#d84a3c" />
<circle cx="175.500" cy="591" r="2.200" fill="#b8866a"/>
<polygon points="173.5,608.0 180.5,607.0 180.0,622.0 174.5,622.0" fill="#70707e" />
<polygon points="51.6,487.0 404.0,555.0 407.5,562.5 54.0,493.5" fill="#424552" />
<polygon points="51.6,487.0 404.0,555.0 404.7,556.5 52.0,488.8" fill="#5e6274" />
<polygon points="404.0,554.0 430.7,543.0 433.5,548.2 407.4,562.7" fill="#6a6e82" />
<polygon points="404.0,555.0 407.4,562.7 433.5,548.2 434.0,550.0 408.0,565.0" fill="#484b58" />
<polygon points="51.6,488.0 153.0,457.5 156.0,461.0 56.0,492.0" fill="#484b58" />
<polygon points="92.3,438.7 185.0,454.0 186.0,462.5 95.2,445.5" fill="#3e3e3e" />
<polygon points="185.0,454.0 435.0,496.0 435.0,500.5 186.0,458.5" fill="#9e9e8e" />
<polygon points="186.0,458.5 435.0,500.5 435.0,506.5 186.0,464.0" fill="#6e6e62" />
<polygon points="435.0,496.0 510.0,420.3 510.0,429.0 435.0,506.5" fill="#47473f" />
<polygon points="201.7,372.9 510.0,403.0 510.0,420.3 434.9,495.9 92.3,438.7" fill="#2d2d2e" />
<polygon points="96.0,438.5 185.0,454.0 228.0,447.0 300.0,422.0 334.0,408.0 280.0,413.0 200.0,425.0 140.0,430.0 110.0,432.0" fill="#1b1b1d" filter="url(#blur05)"/>
<polygon points="208.2,476.0 231.5,480.5 231.5,521.3 208.2,516.8" fill="#4a4a46" />
<polygon points="211.7,478.5 231.5,482.0 231.5,521.3 211.7,516.3" fill="#8e8e8a" />
<polygon points="212.7,479.8 230.0,483.0 230.0,518.8 212.7,513.8" fill="#7c7a6e" />
<polygon points="206.2,516.3 233.5,521.3 233.5,524.3 206.2,519.3" fill="#5a5e70" />
<polygon points="263.5,485.0 289.7,490.0 289.7,530.9 263.5,525.9" fill="#5c5c5c" />
<polygon points="267.0,487.5 289.7,491.5 289.7,530.9 267.0,525.4" fill="#c6c6c2" />
<polygon points="268.0,488.8 288.2,492.5 288.2,528.4 268.0,522.9" fill="#6e6c5e" />
<polygon points="261.5,525.4 291.7,530.9 291.7,533.9 261.5,528.4" fill="#5a5e70" />
<polygon points="268.5,511.0 288.0,515.0 288.0,527.0 268.5,523.0" fill="#7c5c3a" />
<polygon points="329.4,497.8 356.5,503.3 356.5,543.5 329.4,538.0" fill="#5c5c5c" />
<polygon points="332.9,500.3 356.5,504.8 356.5,543.5 332.9,537.5" fill="#c6c6c2" />
<polygon points="333.9,501.6 355.0,505.8 355.0,541.0 333.9,535.0" fill="#7e7c6c" />
<polygon points="327.4,537.5 358.5,543.5 358.5,546.5 327.4,540.5" fill="#5a5e70" />
<polygon points="237.0,583.0 263.3,588.0 263.3,627.0 237.0,622.0" fill="#5c5c5c" />
<polygon points="240.5,585.5 263.3,589.5 263.3,627.0 240.5,621.5" fill="#c6c6c2" />
<polygon points="241.5,586.8 261.8,590.5 261.8,624.5 241.5,619.0" fill="#7e7c6c" />
<polygon points="235.0,621.5 265.3,627.0 265.3,630.0 235.0,624.5" fill="#5a5e70" />
<polygon points="336.0,608.0 403.0,623.6 403.0,662.0 336.0,646.8" fill="#a8a8ac" />
<polygon points="341.0,613.0 367.0,619.0 367.0,650.0 341.0,644.0" fill="#8a7468" />
<polygon points="372.0,620.0 399.0,626.5 399.0,658.0 372.0,652.0" fill="#8a7468" />
<polygon points="334.0,646.0 405.0,662.0 403.0,666.5 333.0,650.0" fill="#6a6e7c" />
<polygon points="336.0,608.0 340.0,609.0 340.0,646.0 336.0,646.0" fill="#5a5e66" />
<polygon points="408.0,620.8 419.0,613.5 419.0,652.8 408.0,658.6" fill="#8a8a8e" />
<polygon points="409.5,628.0 414.0,625.0 414.0,650.0 409.5,653.0" fill="#d3cfaa" />
<polygon points="414.0,622.0 417.5,619.5 417.5,651.0 414.0,653.0" fill="#6a6a66" />
<polygon points="400.0,660.0 417.6,651.3 419.0,655.5 403.0,665.0" fill="#5e6274" />
<polygon points="438.0,568.5 503.0,527.0 503.5,537.0 438.0,580.0" fill="#7b7c71" />
<polygon points="496.0,503.0 510.0,497.0 510.0,507.0 496.0,513.0" fill="#7b7c71" />
<polygon points="483.0,487.0 497.0,478.4 497.0,511.9 483.0,519.0" fill="#8a8a8a" />
<polygon points="484.5,489.0 493.0,484.0 493.0,512.0 484.5,516.5" fill="#9a9a96" />
<polygon points="493.0,482.0 496.0,480.0 496.0,511.0 493.0,513.0" fill="#55565a" />
<polygon points="480.6,518.5 497.0,509.5 499.0,514.0 480.6,525.0" fill="#6e7284" />
<polygon points="475.7,570.0 488.8,559.8 488.8,586.0 475.7,594.7" fill="#8a8a8a" />
<polygon points="477.0,572.5 485.0,566.5 485.0,587.0 477.0,592.0" fill="#77776e" />
<polygon points="485.0,564.0 488.0,562.0 488.0,586.0 485.0,588.0" fill="#55565a" />
<polygon points="474.3,595.2 490.2,586.5 491.5,591.5 474.3,604.8" fill="#6e7284" />
<polygon points="256.0,651.0 282.0,670.0 352.0,700.0 374.0,716.0 372.0,764.0 281.0,733.0 256.0,731.0" fill="#515146" />
<polygon points="279.0,676.0 374.0,716.0 372.0,764.0 281.0,733.0" fill="#4a4a4a" />
<polygon points="256.0,651.0 282.0,676.0 281.0,733.0 256.0,731.0" fill="#5f6054" />
<polygon points="374.0,716.0 396.0,744.0 395.0,773.0 372.0,764.0" fill="#606156" />
<polygon points="352.6,700.0 399.0,700.0 396.0,744.0 374.0,719.0 372.0,711.6 352.6,704.0" fill="#d3cfaa" />
<path d="M256 651 L256 645 C260 641 270 641 275 647 C279 652 280 660 283 667 C290 674 300 680 308 684.600 C313 684 318 680 323.600 681.700 C328 684 331 689 335 692 C341 695 347 698 352.600 700 L352.600 705 L282 676 Z" fill="#5a5a4c"/>
<polygon points="352.6,700.0 374.0,704.5 372.0,711.6 352.6,704.5" fill="#c9c9c1" />
<polygon points="277.0,672.0 281.0,676.0 281.0,733.0 277.0,731.5" fill="#d4d0a4" />
<polygon points="258.0,723.5 398.0,767.0 394.6,773.0 252.4,731.0" fill="#55554f" />
<polygon points="192.9,827.6 194.9,818.0 210.0,795.0 232.9,778.0 265.4,749.0 298.0,760.5 310.0,781.5 307.4,796.0 292.5,810.0 264.0,837.0 258.0,852.0 245.0,853.0 239.7,850.7 193.6,833.0" fill="#4d5057" />
<polygon points="232.9,778.0 265.4,749.0 298.0,760.5 264.0,789.7" fill="#63666e" />
<polygon points="265.4,749.0 298.0,760.5 296.0,763.0 264.0,752.0" fill="#777a82" />
<polygon points="241.0,773.4 249.0,767.3 271.5,775.4 264.0,782.2" fill="#3c3e40" />
<polygon points="216.0,797.8 232.2,780.2 262.7,791.0 255.2,812.7" fill="#4a4c46" />
<polygon points="222.0,798.0 234.0,785.0 258.0,793.0 252.0,808.0" fill="#56584e" />
<polygon points="262.7,801.9 266.8,788.3 289.8,769.3 296.6,774.7 266.8,808.6" fill="#2f3135" />
<polygon points="298.0,762.0 309.0,781.0 306.0,789.0 297.0,775.0" fill="#3a3c42" />
<polygon points="194.9,818.0 216.0,797.8 255.2,812.7 246.0,836.0 226.0,838.5" fill="#555860" />
<polygon points="193.0,826.0 226.0,838.5 246.0,837.0 245.0,853.0 239.7,850.7 193.6,833.0" fill="#383b40" />
<polygon points="266.8,808.6 296.6,776.0 307.0,792.0 292.5,810.0 264.0,837.0 258.0,835.0" fill="#45484f" />
<ellipse cx="252.500" cy="843.500" rx="5.500" ry="9.500" fill="#222224" transform="rotate(18 252.500 843.500)"/><ellipse cx="252.300" cy="843.500" rx="3" ry="5.800" fill="#9a9aa2" transform="rotate(18 252.300 843.500)"/><ellipse cx="252.300" cy="843.500" rx="1.200" ry="2.200" fill="#55585e" transform="rotate(18 252.300 843.500)"/>
<ellipse cx="233.500" cy="838.300" rx="6.500" ry="2.300" fill="#b8bcc6" transform="rotate(8 233.500 838.300)"/><ellipse cx="233.500" cy="838.300" rx="3" ry="1.200" fill="#22242a" transform="rotate(8 233.500 838.300)"/><ellipse cx="196" cy="822.500" rx="1.500" ry="3" fill="#b8bcc6"/>
<path d="M197 828 L228 840" stroke="#1e2024" stroke-width="2.200"/><path d="M264 837 L292.500 810" stroke="#a6a8b0" stroke-width="1.100"/>
<rect x="209" y="789" width="3.500" height="5" fill="#484b52" transform="rotate(-20 211 791)"/><rect x="261" y="806" width="3" height="5" fill="#1e2024"/>
<polygon points="290.5,781.5 293.0,779.5 305.5,779.5 308.0,781.5 306.8,797.0 305.5,812.0 293.5,812.0 291.0,797.0" fill="#232327" />
<polygon points="294.0,812.0 298.3,812.0 298.0,825.5 294.5,825.5" fill="#232327" />
<polygon points="300.5,812.0 305.0,812.0 304.5,825.5 301.0,825.5" fill="#232327" />
<polygon points="292.5,825.0 298.5,825.0 298.5,827.0 291.5,827.0" fill="#232327" />
<polygon points="301.0,825.0 306.0,825.0 307.0,827.0 301.0,827.0" fill="#232327" />
<circle cx="299.300" cy="774.300" r="3.800" fill="#232327"/>
<polygon points="319.5,765.0 322.0,768.0 324.0,765.0 327.5,778.0 332.5,786.5 323.0,790.0 317.0,785.5" fill="#17171b" />
<rect x="84" y="988" width="352" height="7.500" fill="#e2e2e2"/><rect x="84" y="988" width="352" height="2.500" fill="#fafafa"/><rect x="84" y="994" width="352" height="1.500" fill="#8c8c8c"/><path d="M255.500 993.500 l4 -4.500 l4 4.500z" fill="#000"/>
</svg>
<svg width="500" height="809" style="left:526px;top:187px;overflow:hidden" viewBox="526 187 500 809">
<g fill="#a3a3a3" shape-rendering="crispEdges"><rect x="651.0" y="424.0" width="64.0" height="6.0"/><rect x="651.0" y="439.5" width="303.5" height="3.0"/><rect x="700.0" y="418.0" width="250.0" height="2.5"/><rect x="640.0" y="419.0" width="11.0" height="2.0"/><rect x="630.0" y="417.0" width="12.0" height="2.0"/><rect x="654.5" y="430.0" width="2.5" height="7.0"/><rect x="692.5" y="430.0" width="2.5" height="7.0"/><rect x="780.5" y="430.0" width="2.5" height="7.0"/><rect x="788.5" y="430.0" width="2.5" height="7.0"/><rect x="816.5" y="430.0" width="2.5" height="7.0"/><rect x="832.5" y="430.0" width="2.5" height="7.0"/><rect x="904.5" y="430.0" width="2.5" height="7.0"/><rect x="911.0" y="424.0" width="7.0" height="16.0"/><rect x="757.0" y="451.0" width="160.5" height="4.0"/><rect x="757.0" y="449.0" width="43.0" height="2.0"/><rect x="643.0" y="478.0" width="12.0" height="1.5"/><rect x="860.0" y="492.5" width="30.0" height="3.0"/><rect x="906.0" y="492.5" width="47.0" height="3.0"/><rect x="800.0" y="462.0" width="6.5" height="53.0"/><rect x="800.0" y="533.0" width="6.5" height="56.0"/><rect x="825.5" y="533.0" width="9.5" height="56.0"/><rect x="776.0" y="489.0" width="77.0" height="4.5"/><rect x="603.0" y="484.5" width="354.0" height="2.5"/><rect x="613.5" y="515.5" width="334.5" height="3.5"/><rect x="861.0" y="493.0" width="28.0" height="3.0"/><rect x="904.0" y="493.0" width="53.0" height="3.0"/><rect x="712.0" y="490.0" width="4.0" height="25.0"/><rect x="778.0" y="496.0" width="3.0" height="19.0"/><rect x="725.0" y="512.0" width="2.0" height="3.0"/><rect x="728.2" y="509.6" width="2.0" height="5.4"/><rect x="731.4" y="507.2" width="2.0" height="7.8"/><rect x="734.6" y="504.8" width="2.0" height="10.2"/><rect x="737.8" y="502.4" width="2.0" height="12.6"/><rect x="741.0" y="500.0" width="2.0" height="15.0"/><rect x="744.2" y="497.6" width="2.0" height="17.4"/><rect x="668.0" y="541.0" width="8.0" height="17.0"/><rect x="680.0" y="541.0" width="7.0" height="17.0"/><rect x="647.0" y="557.0" width="53.0" height="2.5"/><rect x="650.0" y="571.0" width="50.0" height="3.0"/><rect x="663.0" y="577.0" width="39.0" height="3.0"/><rect x="705.0" y="540.0" width="4.0" height="49.0"/><rect x="655.0" y="541.0" width="7.0" height="17.0"/><rect x="690.0" y="556.0" width="7.0" height="33.0"/><rect x="757.0" y="430.0" width="181.0" height="2.5"/><rect x="754.0" y="540.0" width="2.0" height="43.0"/><rect x="894.0" y="565.0" width="63.0" height="2.0"/></g>
<path d="M628.5 406.5H956.5V451.5H628.5Z M630.5 408.5H954.5V415.5H630.5Z M630.5 416.5H954.5 M630.5 408.5V415.5 M638.5 408.5V415.5 M646.5 408.5V415.5 M648.5 408.5V415.5 M654.5 408.5V415.5 M662.5 408.5V415.5 M670.5 408.5V415.5 M678.5 408.5V415.5 M686.5 408.5V415.5 M688.5 408.5V415.5 M694.5 408.5V415.5 M702.5 408.5V415.5 M710.5 408.5V415.5 M719.5 408.5V415.5 M727.5 408.5V415.5 M729.5 408.5V415.5 M735.5 408.5V415.5 M743.5 408.5V415.5 M751.5 408.5V415.5 M759.5 408.5V415.5 M767.5 408.5V415.5 M769.5 408.5V415.5 M775.5 408.5V415.5 M783.5 408.5V415.5 M791.5 408.5V415.5 M799.5 408.5V415.5 M807.5 408.5V415.5 M809.5 408.5V415.5 M815.5 408.5V415.5 M823.5 408.5V415.5 M831.5 408.5V415.5 M839.5 408.5V415.5 M847.5 408.5V415.5 M849.5 408.5V415.5 M855.5 408.5V415.5 M863.5 408.5V415.5 M871.5 408.5V415.5 M880.5 408.5V415.5 M888.5 408.5V415.5 M890.5 408.5V415.5 M896.5 408.5V415.5 M904.5 408.5V415.5 M912.5 408.5V415.5 M920.5 408.5V415.5 M928.5 408.5V415.5 M930.5 408.5V415.5 M936.5 408.5V415.5 M944.5 408.5V415.5 M952.5 408.5V415.5 M630.5 443.5H954.5V450.5H630.5Z M630.5 442.5H954.5 M630.5 443.5V450.5 M633.5 443.5H635.5V446.5H633.5Z M638.5 443.5V450.5 M646.5 443.5V450.5 M649.5 443.5H651.5V446.5H649.5Z M654.5 443.5V450.5 M662.5 443.5V450.5 M665.5 443.5H667.5V446.5H665.5Z M670.5 443.5V450.5 M678.5 443.5V450.5 M681.5 443.5H683.5V446.5H681.5Z M686.5 443.5V450.5 M694.5 443.5V450.5 M697.5 443.5H699.5V446.5H697.5Z M702.5 443.5V450.5 M710.5 443.5V450.5 M713.5 443.5H715.5V446.5H713.5Z M719.5 443.5V450.5 M727.5 443.5V450.5 M730.5 443.5H732.5V446.5H730.5Z M735.5 443.5V450.5 M743.5 443.5V450.5 M746.5 443.5H748.5V446.5H746.5Z M751.5 443.5V450.5 M759.5 443.5V450.5 M762.5 443.5H764.5V446.5H762.5Z M767.5 443.5V450.5 M775.5 443.5V450.5 M778.5 443.5H780.5V446.5H778.5Z M783.5 443.5V450.5 M791.5 443.5V450.5 M794.5 443.5H796.5V446.5H794.5Z M799.5 443.5V450.5 M807.5 443.5V450.5 M810.5 443.5H812.5V446.5H810.5Z M815.5 443.5V450.5 M823.5 443.5V450.5 M826.5 443.5H828.5V446.5H826.5Z M831.5 443.5V450.5 M839.5 443.5V450.5 M842.5 443.5H844.5V446.5H842.5Z M847.5 443.5V450.5 M855.5 443.5V450.5 M858.5 443.5H860.5V446.5H858.5Z M863.5 443.5V450.5 M871.5 443.5V450.5 M874.5 443.5H876.5V446.5H874.5Z M880.5 443.5V450.5 M888.5 443.5V450.5 M891.5 443.5H893.5V446.5H891.5Z M896.5 443.5V450.5 M904.5 443.5V450.5 M907.5 443.5H909.5V446.5H907.5Z M912.5 443.5V450.5 M920.5 443.5V450.5 M923.5 443.5H925.5V446.5H923.5Z M928.5 443.5V450.5 M936.5 443.5V450.5 M939.5 443.5H941.5V446.5H939.5Z M944.5 443.5V450.5 M952.5 443.5V450.5 M955.5 443.5H957.5V446.5H955.5Z M630.5 418.5H942.5 M630.5 420.5H942.5 M630.5 423.5H942.5 M630.5 432.5H942.5 M630.5 433.5H942.5 M630.5 436.5H942.5 M630.5 437.5H942.5 M651.0 426.5H940.0 M651.0 428.5H940.0 M632.5 416.5V443.5 M640.5 416.5V443.5 M643.5 416.5V443.5 M646.5 416.5V443.5 M650.5 416.5V443.5 M653.5 416.5V443.5 M655.5 423.5V442.5 M657.5 430.5V442.5 M662.5 423.5V442.5 M664.5 430.5V442.5 M671.5 423.5V442.5 M679.5 423.5V442.5 M681.5 430.5V442.5 M686.5 423.5V442.5 M688.5 430.5V442.5 M693.5 423.5V442.5 M701.5 423.5V442.5 M708.5 423.5V442.5 M716.5 423.5V442.5 M718.5 430.5V442.5 M725.5 423.5V442.5 M727.5 430.5V442.5 M734.5 423.5V442.5 M741.5 423.5V442.5 M750.5 423.5V442.5 M752.5 430.5V442.5 M757.5 423.5V442.5 M769.5 423.5V442.5 M781.5 423.5V442.5 M783.5 430.5V442.5 M789.5 423.5V442.5 M798.5 423.5V442.5 M810.5 423.5V442.5 M812.5 430.5V442.5 M817.5 423.5V442.5 M826.5 423.5V442.5 M828.5 430.5V442.5 M833.5 423.5V442.5 M842.5 423.5V442.5 M844.5 430.5V442.5 M854.5 423.5V442.5 M861.5 423.5V442.5 M868.5 423.5V442.5 M870.5 430.5V442.5 M880.5 423.5V442.5 M882.5 430.5V442.5 M889.5 423.5V442.5 M891.5 430.5V442.5 M897.5 423.5V442.5 M905.5 423.5V442.5 M913.5 423.5V442.5 M915.5 430.5V442.5 M925.5 423.5V442.5 M927.5 430.5V442.5 M934.5 423.5V442.5 M940.5 410.5H954.5V440.5H940.5Z M944.5 416.5V440.5 M948.5 416.5V440.5 M905.5 424.5H916.5V438.5H905.5Z M643.5 451.5V485.5 M645.5 451.5V485.5 M646.5 451.5V485.5 M648.5 451.5V485.5 M650.5 451.5V485.5 M653.5 451.5V485.5 M709.5 451.5V589.5 M713.5 451.5V589.5 M717.5 451.5V589.5 M719.5 451.5V589.5 M903.5 451.5V589.5 M908.5 451.5V589.5 M912.5 451.5V589.5 M942.5 451.5V589.5 M951.5 451.5V589.5 M781.5 455.5V589.5 M783.5 455.5V589.5 M809.5 455.5V589.5 M811.5 455.5V589.5 M837.5 455.5V589.5 M841.5 455.5V589.5 M853.5 455.5V589.5 M884.5 455.5V589.5 M687.5 463.5H740.5V495.5H687.5Z M689.5 465.5H738.5V493.5H689.5Z M691.5 467.5H736.5V491.5H691.5Z M745.5 461.5H770.5V495.5H745.5Z M747.5 463.5H768.5V493.5H747.5Z M862.5 462.5H887.5V493.5H862.5Z M864.5 464.5H885.5V491.5H864.5Z M908.5 462.5H950.5V493.5H908.5Z M910.5 464.5H948.5V491.5H910.5Z M864.5 458.5H885.5V462.5H864.5Z M802.5 462.5H852.5V495.5H802.5Z M804.5 464.5H850.5V493.5H804.5Z M824.5 462.5V515.5 M828.5 462.5V515.5 M849.5 462.5V515.5 M784.0 470.0L795.0 500.0 M795.0 500.0L784.0 515.0 M806.0 470.0L795.0 500.0 M795.0 500.0L806.0 515.0 M786.0 470.0L795.0 492.0 M804.0 470.0L795.0 492.0 M603.5 487.5V589.5 M605.5 487.5V589.5 M613.5 487.5V589.5 M603.0 521.5H645.0 M653.0 490.5H684.0 M686.0 490.5H713.0 M719.0 490.5H745.0 M776.0 490.5H800.0 M745.0 490.5H776.0 M653.0 492.8H684.0 M686.0 492.8H713.0 M719.0 492.8H745.0 M776.0 492.8H800.0 M745.0 492.8H776.0 M653.0 495.1H684.0 M686.0 495.1H713.0 M719.0 495.1H745.0 M776.0 495.1H800.0 M745.0 495.1H776.0 M653.0 497.4H684.0 M686.0 497.4H713.0 M719.0 497.4H745.0 M776.0 497.4H800.0 M745.0 497.4H776.0 M653.0 499.7H684.0 M686.0 499.7H713.0 M719.0 499.7H745.0 M776.0 499.7H800.0 M745.0 499.7H776.0 M653.0 502.0H684.0 M686.0 502.0H713.0 M719.0 502.0H745.0 M776.0 502.0H800.0 M745.0 502.0H776.0 M653.0 504.3H684.0 M686.0 504.3H713.0 M719.0 504.3H745.0 M776.0 504.3H800.0 M745.0 504.3H776.0 M653.0 506.6H684.0 M686.0 506.6H713.0 M719.0 506.6H745.0 M776.0 506.6H800.0 M653.0 508.9H684.0 M686.0 508.9H713.0 M719.0 508.9H745.0 M776.0 508.9H800.0 M653.0 511.2H684.0 M686.0 511.2H713.0 M719.0 511.2H745.0 M776.0 511.2H800.0 M653.0 513.5H684.0 M686.0 513.5H713.0 M719.0 513.5H745.0 M776.0 513.5H800.0 M653.5 487.5V515.5 M655.5 487.5V515.5 M683.5 487.5V515.5 M686.5 487.5V515.5 M688.5 487.5V515.5 M690.5 487.5V515.5 M693.5 487.5V515.5 M696.5 487.5V515.5 M744.5 487.5V515.5 M746.5 487.5V515.5 M775.5 487.5V515.5 M603.0 588.5H952.0 M603.0 589.5H776.0 M613.0 521.5H770.0 M613.0 523.5H660.0 M608.5 523.5V589.5 M632.5 523.5V589.5 M634.5 523.5V589.5 M606.5 545.5H610.5V589.5H606.5Z M654.5 541.5V557.5 M656.5 541.5V557.5 M659.5 541.5V557.5 M662.5 541.5V557.5 M665.5 541.5V557.5 M667.5 541.5V557.5 M670.5 541.5V557.5 M673.5 541.5V557.5 M676.5 541.5V557.5 M679.5 541.5V557.5 M681.5 541.5V557.5 M684.5 541.5V557.5 M687.5 541.5V557.5 M646.5 523.5V589.5 M649.5 523.5V589.5 M652.5 523.5V589.5 M697.5 523.5V589.5 M700.5 523.5V589.5 M704.5 523.5V589.5 M722.5 523.5V589.5 M725.5 523.5V589.5 M730.5 523.5V589.5 M735.5 523.5V589.5 M640.0 545.5H735.0 M640.0 552.5H735.0 M640.0 566.5H735.0 M640.0 583.5H735.0 M640.0 585.5H735.0 M644.5 548.5V575.5 M648.5 536.5V589.5 M650.5 536.5V589.5 M653.5 536.5V589.5 M657.5 524.0V589.5 M660.5 541.5V589.5 M663.5 548.5V575.5 M668.5 524.0V575.5 M671.5 524.0V589.5 M675.5 524.0V566.5 M679.5 548.5V566.5 M681.5 548.5V566.5 M683.5 536.5V589.5 M686.5 548.5V589.5 M688.5 541.5V589.5 M690.5 530.5V589.5 M695.5 530.5V575.5 M700.5 530.5V589.5 M703.5 524.0V566.5 M706.5 541.5V575.5 M711.5 541.5V566.5 M713.5 530.5V566.5 M717.5 548.5V566.5 M720.5 530.5V589.5 M722.5 541.5V575.5 M726.5 536.5V589.5 M729.5 524.0V575.5 M732.5 524.0V589.5 M737.5 541.5V589.5 M681.5 558.2L698.6 576.5 M683.3 550.1L706.1 574.3 M703.1 555.2L717.0 573.8 M672.1 556.1L686.1 578.5 M698.5 559.8L724.3 581.9 M655.5 552.1L672.4 579.2 M697.9 547.0L727.3 563.2 M648.2 549.4L664.9 571.6 M718.8 552.2L728.9 580.8 M700.5 417.5V423.5 M701.5 424.5V431.5 M704.5 417.5V423.5 M708.5 417.5V423.5 M713.5 417.5V423.5 M714.5 424.5V431.5 M718.5 417.5V423.5 M719.5 424.5V431.5 M724.5 417.5V423.5 M725.5 424.5V431.5 M732.5 417.5V423.5 M733.5 424.5V431.5 M736.5 417.5V423.5 M741.5 417.5V423.5 M745.5 417.5V423.5 M746.5 424.5V431.5 M753.5 417.5V423.5 M758.5 417.5V423.5 M766.5 417.5V423.5 M772.5 417.5V423.5 M773.5 424.5V431.5 M777.5 417.5V423.5 M778.5 424.5V431.5 M781.5 417.5V423.5 M782.5 424.5V431.5 M786.5 417.5V423.5 M787.5 424.5V431.5 M791.5 417.5V423.5 M796.5 417.5V423.5 M797.5 424.5V431.5 M801.5 417.5V423.5 M802.5 424.5V431.5 M806.5 417.5V423.5 M812.5 417.5V423.5 M813.5 424.5V431.5 M820.5 417.5V423.5 M824.5 417.5V423.5 M830.5 417.5V423.5 M838.5 417.5V423.5 M843.5 417.5V423.5 M844.5 424.5V431.5 M847.5 417.5V423.5 M852.5 417.5V423.5 M857.5 417.5V423.5 M858.5 424.5V431.5 M865.5 417.5V423.5 M869.5 417.5V423.5 M870.5 424.5V431.5 M875.5 417.5V423.5 M883.5 417.5V423.5 M887.5 417.5V423.5 M891.5 417.5V423.5 M892.5 424.5V431.5 M897.5 417.5V423.5 M898.5 424.5V431.5 M901.5 417.5V423.5 M902.5 424.5V431.5 M905.5 417.5V423.5 M909.5 417.5V423.5 M910.5 424.5V431.5 M914.5 417.5V423.5 M922.5 417.5V423.5 M923.5 424.5V431.5 M930.5 417.5V423.5 M931.5 424.5V431.5 M935.5 417.5V423.5 M741.5 528.5H770.5V589.5H741.5Z M745.5 532.5H766.5V589.5H745.5Z M761.5 535.5V589.5 M728.5 526.5H772.5V589.5H728.5Z M800.5 532.5H852.5V588.5H800.5Z M802.5 534.5H850.5V586.5H802.5Z M855.5 534.5H880.5V589.5H855.5Z M894.5 532.5H950.5V565.5H894.5Z M896.5 534.5H948.5V563.5H896.5Z M898.5 536.5H946.5V561.5H898.5Z M921.5 534.5V566.5 M918.5 534.5V566.5 M812.0 545.0L818.0 560.0 M818.0 560.0L818.0 575.0 M818.0 575.0L810.0 589.0 M806.0 563.5H826.0 M788.0 571.5H800.0 M788.5 571.5H799.5V589.5H788.5Z" fill="none" stroke="#a3a3a3" stroke-width="1" shape-rendering="crispEdges"/>
<polyline points="617.3,540.3 640.0,531.0 687.0,523.8 742.2,537.4" fill="none" stroke="#a3a3a3" stroke-width="2.6"/><polyline points="640.0,535.0 687.0,528.0 735.0,540.0" fill="none" stroke="#a3a3a3" stroke-width="2.2"/><polyline points="617.3,540.3 625.0,534.0 645.0,527.0 660.0,523.0" fill="none" stroke="#a3a3a3" stroke-width="1"/><polyline points="619.0,542.0 632.8,552.0 632.8,589.0" fill="none" stroke="#a3a3a3" stroke-width="1"/><polyline points="683.0,529.0 687.5,526.5 692.0,529.0 687.5,531.5 683.0,529.0" fill="none" stroke="#a3a3a3" stroke-width="1.6"/><polyline points="742.0,537.0 760.0,527.0 770.0,523.0" fill="none" stroke="#a3a3a3" stroke-width="1"/><polyline points="730.0,528.0 745.0,528.0 745.0,524.0 752.0,524.0 752.0,521.0" fill="none" stroke="#a3a3a3" stroke-width="1.4"/><polyline points="695.7,548.0 709.3,584.8" fill="none" stroke="#a3a3a3" stroke-width="2.2"/><polyline points="641.5,564.5 651.2,584.8" fill="none" stroke="#a3a3a3" stroke-width="1.8"/><polyline points="733.5,563.5 726.7,584.8" fill="none" stroke="#a3a3a3" stroke-width="1.8"/><polyline points="641.5,564.5 733.5,563.5" fill="none" stroke="#a3a3a3" stroke-width="1.2"/><polyline points="700.0,545.0 712.0,540.0 712.0,535.0 722.0,535.0" fill="none" stroke="#a3a3a3" stroke-width="1.2"/><polyline points="660.0,589.0 676.0,560.0 700.0,548.0" fill="none" stroke="#a3a3a3" stroke-width="1"/><polyline points="690.0,560.0 720.0,589.0" fill="none" stroke="#a3a3a3" stroke-width="1.6"/><polyline points="756.0,560.0 759.0,560.0 759.0,565.0" fill="none" stroke="#a3a3a3" stroke-width="1.2"/>
<path d="M771.5 588.5H951.5V660.5H771.5Z M809.5 588.5V660.5 M810.5 588.5V660.5 M822.5 588.5V660.5 M831.5 588.5V660.5 M942.5 588.5V660.5 M842.5 605.5H932.5V658.5H842.5Z M842.5 618.5H932.5 M842.5 645.5H932.5 M831.5 659.5H942.5" fill="none" stroke="#000" stroke-width="1.400" shape-rendering="crispEdges"/>
<path d="M842.5 634 L932.5 628 M842.5 648 L932.5 640 M842.5 623 L932.5 620" fill="none" stroke="#000" stroke-width=".8"/>
<path d="M870 658 V652 L868.500 650 V644 L871 641 L873 634 Q874 627 881 625.500 L884 622.500 H904 L907 625.500 Q914 627 915 634 L917 641 L919.500 644 V650 L918 652 V658 H911 V655 H877 V658Z" fill="#000"/><rect x="866" y="640.500" width="4" height="2.500" fill="#000"/><rect x="918" y="640.500" width="4" height="2.500" fill="#000"/><path d="M877 633 h7 v-4 h-5z M888 633 h12 v-4 h-12z M904 633 h7 l-2 -4 h-5z" fill="#fff" opacity=".55"/><rect x="880" y="645" width="28" height="1" fill="#fff" opacity=".5"/>
<polygon points="794.4,754.4 814.6,766.0 800.7,791.1 779.3,780.7" fill="none" stroke="#a8a8a8" stroke-width=".9"/>
<polygon points="795.3,795.3 815.7,807.4 800.7,832.2 780.2,820.6" fill="none" stroke="#a8a8a8" stroke-width=".9"/>
<polygon points="909.1,783.0 922.1,781.3 925.4,804.3 913.3,806.7" fill="none" stroke="#a8a8a8" stroke-width=".9"/>
<polygon points="913.3,822.0 945.8,854.5 935.4,865.4 902.2,832.9" fill="none" stroke="#a8a8a8" stroke-width=".9"/>
<polygon points="804.6,935.1 816.9,946.3 793.7,969.5 780.9,957.7" fill="none" stroke="#a8a8a8" stroke-width=".9"/>
</svg>
<svg width="500" height="809" style="left:1042px;top:187px;overflow:hidden" viewBox="1042 187 500 809">
<defs><clipPath id="c1"><polygon points="1244.0,411.8 1313.6,386.6 1371.6,415.7 1389.0,409.5 1461.7,445.7 1440.0,458.0 1389.0,472.0 1345.0,492.0 1300.0,478.0 1262.0,458.0"/></clipPath><clipPath id="c2"><polygon points="1244.0,411.8 1313.6,386.6 1371.6,415.7 1389.0,409.5 1461.7,445.7 1440.0,458.0 1389.0,472.0 1345.0,492.0 1300.0,478.0 1262.0,458.0"/></clipPath><clipPath id="c3"><polygon points="1244.0,411.8 1313.6,386.6 1371.6,415.7 1389.0,409.5 1461.7,445.7 1440.0,458.0 1389.0,472.0 1345.0,492.0 1300.0,478.0 1262.0,458.0"/></clipPath><clipPath id="c4"><polygon points="1244.0,411.8 1313.6,386.6 1371.6,415.7 1389.0,409.5 1461.7,445.7 1440.0,458.0 1389.0,472.0 1345.0,492.0 1300.0,478.0 1262.0,458.0"/></clipPath><clipPath id="c5"><polygon points="1244.0,411.8 1313.6,386.6 1345.0,402.0 1330.0,440.0 1290.0,470.0 1262.0,458.0"/></clipPath><clipPath id="c6"><polygon points="1262.0,458.0 1300.0,478.0 1345.0,492.0 1389.0,472.0 1440.0,458.0 1440.0,468.0 1389.0,484.0 1345.0,504.0 1290.0,496.0 1250.0,478.0"/></clipPath><clipPath id="c7"><polygon points="1262.0,458.0 1300.0,478.0 1345.0,492.0 1389.0,472.0 1440.0,458.0 1440.0,468.0 1389.0,484.0 1345.0,504.0 1290.0,496.0 1250.0,478.0"/></clipPath><clipPath id="c8"><polygon points="1233.3,407.0 1244.0,411.8 1262.0,458.0 1300.0,478.0 1250.0,505.0 1175.0,470.0 1157.8,465.0"/></clipPath><clipPath id="c9"><polygon points="1233.3,407.0 1244.0,411.8 1262.0,458.0 1300.0,478.0 1250.0,505.0 1175.0,470.0 1157.8,465.0"/></clipPath><clipPath id="c10"><polygon points="1233.3,407.0 1244.0,411.8 1262.0,458.0 1300.0,478.0 1250.0,505.0 1175.0,470.0 1157.8,465.0"/></clipPath><clipPath id="c11"><polygon points="1200.0,490.0 1250.0,470.0 1345.0,500.0 1370.0,520.0 1345.0,555.0 1300.0,575.0 1262.0,575.0 1215.0,560.0 1200.0,540.0"/></clipPath><clipPath id="c12"><polygon points="1200.0,490.0 1250.0,470.0 1345.0,500.0 1370.0,520.0 1345.0,555.0 1300.0,575.0 1262.0,575.0 1215.0,560.0 1200.0,540.0"/></clipPath><clipPath id="c13"><polygon points="1200.0,490.0 1250.0,470.0 1345.0,500.0 1370.0,520.0 1345.0,555.0 1300.0,575.0 1262.0,575.0 1215.0,560.0 1200.0,540.0"/></clipPath><clipPath id="c14"><polygon points="1205.0,495.0 1262.0,478.0 1330.0,500.0 1310.0,545.0 1240.0,550.0 1212.0,535.0"/></clipPath><clipPath id="c15"><polygon points="1205.0,495.0 1262.0,478.0 1330.0,500.0 1310.0,545.0 1240.0,550.0 1212.0,535.0"/></clipPath><clipPath id="c16"><polygon points="1215.0,560.0 1262.0,575.0 1300.0,575.0 1345.0,555.0 1345.0,585.0 1300.0,605.0 1262.0,605.0 1215.0,580.0"/></clipPath><clipPath id="c17"><polygon points="1215.0,560.0 1262.0,575.0 1300.0,575.0 1345.0,555.0 1345.0,585.0 1300.0,605.0 1262.0,605.0 1215.0,580.0"/></clipPath><clipPath id="c18"><polygon points="1215.0,560.0 1262.0,575.0 1300.0,575.0 1345.0,555.0 1345.0,585.0 1300.0,605.0 1262.0,605.0 1215.0,580.0"/></clipPath><clipPath id="c19"><polygon points="1133.6,488.3 1176.0,470.8 1215.0,490.0 1215.0,575.0 1203.0,568.6 1135.6,545.4"/></clipPath><clipPath id="c20"><polygon points="1176.0,476.0 1215.0,494.0 1215.0,575.0 1176.0,556.0"/></clipPath><clipPath id="c21"><polygon points="1176.0,476.0 1215.0,494.0 1215.0,575.0 1176.0,556.0"/></clipPath><clipPath id="c22"><polygon points="1203.0,568.6 1215.0,575.0 1262.0,600.0 1300.0,600.0 1345.0,560.0 1371.0,565.0 1345.0,585.0 1290.0,618.0 1262.0,606.0 1203.0,580.0"/></clipPath><clipPath id="c23"><polygon points="1203.0,568.6 1215.0,575.0 1262.0,600.0 1300.0,600.0 1345.0,560.0 1371.0,565.0 1345.0,585.0 1290.0,618.0 1262.0,606.0 1203.0,580.0"/></clipPath><clipPath id="c24"><polygon points="1345.0,492.0 1389.0,472.0 1440.0,458.0 1452.0,453.0 1452.0,495.0 1420.0,515.0 1404.0,510.0 1371.0,565.0 1345.0,560.0"/></clipPath><clipPath id="c25"><polygon points="1345.0,492.0 1389.0,472.0 1410.0,480.0 1410.0,520.0 1371.0,545.0 1345.0,540.0"/></clipPath><clipPath id="c26"><polygon points="1345.0,500.0 1400.0,476.0 1400.0,530.0 1371.0,560.0 1345.0,560.0"/></clipPath></defs>
<path clip-path="url(#c1)" d="M1196.0 386.6L1407.7 287.1 M1198.6 392.2L1410.3 292.8 M1201.3 397.9L1413.0 298.4 M1203.9 403.5L1415.6 304.0 M1206.6 409.1L1418.2 309.6 M1209.2 414.7L1420.9 315.2 M1211.8 420.3L1423.5 320.8 M1214.5 425.9L1426.1 326.4 M1217.1 431.5L1428.8 332.0 M1219.7 437.1L1431.4 337.6 M1222.4 442.7L1434.1 343.3 M1225.0 448.4L1436.7 348.9 M1227.7 454.0L1439.3 354.5 M1230.3 459.6L1442.0 360.1 M1232.9 465.2L1444.6 365.7 M1235.6 470.8L1447.2 371.3 M1238.2 476.4L1449.9 376.9 M1240.8 482.0L1452.5 382.5 M1243.5 487.6L1455.2 388.1 M1246.1 493.2L1457.8 393.8 M1248.7 498.9L1460.4 399.4 M1251.4 504.5L1463.1 405.0 M1254.0 510.1L1465.7 410.6 M1256.7 515.7L1468.3 416.2 M1259.3 521.3L1471.0 421.8 M1261.9 526.9L1473.6 427.4 M1264.6 532.5L1476.3 433.0 M1267.2 538.1L1478.9 438.6 M1269.8 543.7L1481.5 444.3 M1272.5 549.4L1484.2 449.9 M1275.1 555.0L1486.8 455.5 M1277.8 560.6L1489.4 461.1 M1280.4 566.2L1492.1 466.7 M1283.0 571.8L1494.7 472.3 M1285.7 577.4L1497.4 477.9 M1288.3 583.0L1500.0 483.5 M1290.9 588.6L1502.6 489.1 M1293.6 594.2L1505.3 494.8" fill="none" stroke="#a4a4a4" stroke-width="2.8" opacity="1"/>
<path clip-path="url(#c2)" d="M1196.0 386.6L1407.7 287.1 M1197.3 389.4L1409.0 290.0 M1198.6 392.2L1410.3 292.8 M1200.0 395.1L1411.6 295.6 M1201.3 397.9L1413.0 298.4 M1202.6 400.7L1414.3 301.2 M1203.9 403.5L1415.6 304.0 M1205.2 406.3L1416.9 306.8 M1206.6 409.1L1418.2 309.6 M1207.9 411.9L1419.6 312.4 M1209.2 414.7L1420.9 315.2 M1210.5 417.5L1422.2 318.0 M1211.8 420.3L1423.5 320.8 M1213.1 423.1L1424.8 323.6 M1214.5 425.9L1426.1 326.4 M1215.8 428.7L1427.5 329.2 M1217.1 431.5L1428.8 332.0 M1218.4 434.3L1430.1 334.8 M1219.7 437.1L1431.4 337.6 M1221.1 439.9L1432.7 340.5 M1222.4 442.7L1434.1 343.3 M1223.7 445.6L1435.4 346.1 M1225.0 448.4L1436.7 348.9 M1226.3 451.2L1438.0 351.7 M1227.7 454.0L1439.3 354.5 M1229.0 456.8L1440.7 357.3 M1230.3 459.6L1442.0 360.1 M1231.6 462.4L1443.3 362.9 M1232.9 465.2L1444.6 365.7 M1234.2 468.0L1445.9 368.5 M1235.6 470.8L1447.2 371.3 M1236.9 473.6L1448.6 374.1 M1238.2 476.4L1449.9 376.9 M1239.5 479.2L1451.2 379.7 M1240.8 482.0L1452.5 382.5 M1242.2 484.8L1453.8 385.3 M1243.5 487.6L1455.2 388.1 M1244.8 490.4L1456.5 391.0 M1246.1 493.2L1457.8 393.8 M1247.4 496.1L1459.1 396.6 M1248.7 498.9L1460.4 399.4 M1250.1 501.7L1461.7 402.2 M1251.4 504.5L1463.1 405.0 M1252.7 507.3L1464.4 407.8 M1254.0 510.1L1465.7 410.6 M1255.3 512.9L1467.0 413.4 M1256.7 515.7L1468.3 416.2 M1258.0 518.5L1469.7 419.0 M1259.3 521.3L1471.0 421.8 M1260.6 524.1L1472.3 424.6 M1261.9 526.9L1473.6 427.4 M1263.3 529.7L1474.9 430.2 M1264.6 532.5L1476.3 433.0 M1265.9 535.3L1477.6 435.8 M1267.2 538.1L1478.9 438.6 M1268.5 540.9L1480.2 441.5 M1269.8 543.7L1481.5 444.3 M1271.2 546.6L1482.8 447.1 M1272.5 549.4L1484.2 449.9 M1273.8 552.2L1485.5 452.7 M1275.1 555.0L1486.8 455.5 M1276.4 557.8L1488.1 458.3 M1277.8 560.6L1489.4 461.1 M1279.1 563.4L1490.8 463.9 M1280.4 566.2L1492.1 466.7 M1281.7 569.0L1493.4 469.5 M1283.0 571.8L1494.7 472.3 M1284.4 574.6L1496.0 475.1 M1285.7 577.4L1497.4 477.9 M1287.0 580.2L1498.7 480.7 M1288.3 583.0L1500.0 483.5 M1289.6 585.8L1501.3 486.3 M1290.9 588.6L1502.6 489.1 M1292.3 591.4L1503.9 492.0 M1293.6 594.2L1505.3 494.8 M1294.9 597.1L1506.6 497.6" fill="none" stroke="#a4a4a4" stroke-width="1" opacity="0.8"/>
<path clip-path="url(#c3)" d="M1298.0 286.3L1508.1 389.2 M1294.1 294.3L1504.1 397.3 M1290.1 302.4L1500.1 405.3 M1286.2 310.5L1496.2 413.4 M1282.2 318.6L1492.2 421.5 M1278.2 326.7L1488.3 429.6 M1274.3 334.7L1484.3 437.7 M1270.3 342.8L1480.3 445.7 M1266.3 350.9L1476.4 453.8 M1262.4 359.0L1472.4 461.9 M1258.4 367.1L1468.5 470.0 M1254.5 375.2L1464.5 478.1 M1250.5 383.2L1460.5 486.2 M1246.5 391.3L1456.6 494.2 M1242.6 399.4L1452.6 502.3 M1238.6 407.5L1448.7 510.4 M1234.7 415.6L1444.7 518.5 M1230.7 423.6L1440.7 526.6 M1226.7 431.7L1436.8 534.6 M1222.8 439.8L1432.8 542.7 M1218.8 447.9L1428.9 550.8 M1214.9 456.0L1424.9 558.9 M1210.9 464.1L1420.9 567.0 M1206.9 472.1L1417.0 575.1 M1203.0 480.2L1413.0 583.1 M1199.0 488.3L1409.1 591.2" fill="none" stroke="#a4a4a4" stroke-width="1.2" stroke-dasharray="1.5 1.5" opacity="1"/>
<path clip-path="url(#c4)" d="M1298.0 286.3L1508.1 389.2 M1286.6 309.6L1496.6 412.5 M1275.2 332.9L1485.2 435.9 M1263.7 356.3L1473.7 459.2 M1252.3 379.6L1462.3 482.6 M1240.8 403.0L1450.9 505.9 M1229.4 426.3L1439.4 529.3 M1217.9 449.7L1428.0 552.6 M1206.5 473.0L1416.5 576.0" fill="none" stroke="#a4a4a4" stroke-width="2.6" opacity="1"/>
<polygon points="1244.0,411.8 1313.6,386.6 1371.6,415.7 1389.0,409.5 1461.7,445.7 1440.0,458.0 1389.0,472.0 1345.0,492.0 1300.0,478.0 1262.0,458.0" fill="none" stroke="#a4a4a4" stroke-width="1.4"/>
<polyline points="1313.6,386.6 1371.6,415.7 1389.0,409.5 1461.7,445.7" fill="none" stroke="#a4a4a4" stroke-width="2.2"/>
<path clip-path="url(#c5)" d="M1225.8 380.3L1345.2 356.5 M1226.8 385.2L1346.2 361.4 M1227.8 390.1L1347.1 366.3 M1228.8 395.0L1348.1 371.2 M1229.7 399.9L1349.1 376.1 M1230.7 404.8L1350.1 381.0 M1231.7 409.7L1351.1 385.9 M1232.7 414.6L1352.0 390.8 M1233.7 419.6L1353.0 395.7 M1234.7 424.5L1354.0 400.6 M1235.6 429.4L1355.0 405.5 M1236.6 434.3L1356.0 410.4 M1237.6 439.2L1356.9 415.3 M1238.6 444.1L1357.9 420.2 M1239.6 449.0L1358.9 425.1 M1240.5 453.9L1359.9 430.0 M1241.5 458.8L1360.9 434.9 M1242.5 463.7L1361.8 439.8 M1243.5 468.6L1362.8 444.7 M1244.5 473.5L1363.8 449.6 M1245.4 478.4L1364.8 454.5 M1246.4 483.3L1365.8 459.4 M1247.4 488.2L1366.7 464.3 M1248.4 493.1L1367.7 469.2 M1249.4 498.0L1368.7 474.1" fill="none" stroke="#a4a4a4" stroke-width="1.8" opacity="1"/>
<path clip-path="url(#c6)" d="M1447.3 376.5L1447.3 581.1 M1442.3 376.5L1442.3 581.1 M1437.3 376.5L1437.3 581.1 M1432.3 376.5L1432.3 581.1 M1427.3 376.5L1427.3 581.1 M1422.3 376.5L1422.3 581.1 M1417.3 376.5L1417.3 581.1 M1412.3 376.5L1412.3 581.1 M1407.3 376.5L1407.3 581.1 M1402.3 376.5L1402.3 581.1 M1397.3 376.5L1397.3 581.1 M1392.3 376.5L1392.3 581.1 M1387.3 376.5L1387.3 581.1 M1382.3 376.5L1382.3 581.1 M1377.3 376.5L1377.3 581.1 M1372.3 376.5L1372.3 581.1 M1367.3 376.5L1367.3 581.1 M1362.3 376.5L1362.3 581.1 M1357.3 376.5L1357.3 581.1 M1352.3 376.5L1352.3 581.1 M1347.3 376.5L1347.3 581.1 M1342.3 376.5L1342.3 581.1 M1337.3 376.5L1337.3 581.1 M1332.3 376.5L1332.3 581.1 M1327.3 376.5L1327.3 581.1 M1322.3 376.5L1322.3 581.1 M1317.3 376.5L1317.3 581.1 M1312.3 376.5L1312.3 581.1 M1307.3 376.5L1307.3 581.1 M1302.3 376.5L1302.3 581.1 M1297.3 376.5L1297.3 581.1 M1292.3 376.5L1292.3 581.1 M1287.3 376.5L1287.3 581.1 M1282.3 376.5L1282.3 581.1 M1277.3 376.5L1277.3 581.1 M1272.3 376.5L1272.3 581.1 M1267.3 376.5L1267.3 581.1 M1262.3 376.5L1262.3 581.1 M1257.3 376.5L1257.3 581.1 M1252.3 376.5L1252.3 581.1 M1247.3 376.5L1247.3 581.1" fill="none" stroke="#a4a4a4" stroke-width="1.2" opacity="1"/>
<path clip-path="url(#c7)" d="M1209.0 429.8L1394.0 342.8 M1211.5 435.2L1396.6 348.2 M1214.1 440.6L1399.2 353.6 M1216.6 446.0L1401.7 359.1 M1219.2 451.5L1404.3 364.5 M1221.7 456.9L1406.8 369.9 M1224.3 462.3L1409.4 375.3 M1226.8 467.8L1411.9 380.8 M1229.4 473.2L1414.5 386.2 M1231.9 478.6L1417.0 391.6 M1234.5 484.1L1419.6 397.1 M1237.0 489.5L1422.1 402.5 M1239.6 494.9L1424.7 407.9 M1242.1 500.3L1427.2 413.4 M1244.7 505.8L1429.8 418.8 M1247.3 511.2L1432.3 424.2 M1249.8 516.6L1434.9 429.6 M1252.4 522.1L1437.4 435.1 M1254.9 527.5L1440.0 440.5 M1257.5 532.9L1442.5 445.9 M1260.0 538.4L1445.1 451.4 M1262.6 543.8L1447.6 456.8 M1265.1 549.2L1450.2 462.2 M1267.7 554.6L1452.7 467.7 M1270.2 560.1L1455.3 473.1 M1272.8 565.5L1457.8 478.5 M1275.3 570.9L1460.4 484.0 M1277.9 576.4L1463.0 489.4 M1280.4 581.8L1465.5 494.8 M1283.0 587.2L1468.1 500.2 M1285.5 592.7L1470.6 505.7 M1288.1 598.1L1473.2 511.1 M1290.6 603.5L1475.7 516.5 M1293.2 608.9L1478.3 522.0 M1295.7 614.4L1480.8 527.4" fill="none" stroke="#a4a4a4" stroke-width="1.4" opacity="1"/>
<path clip-path="url(#c8)" d="M1343.1 471.0L1217.1 567.8 M1339.1 465.8L1213.2 562.6 M1335.2 460.7L1209.2 557.5 M1331.2 455.5L1205.2 552.3 M1327.3 450.4L1201.3 547.2 M1323.3 445.2L1197.3 542.0 M1319.3 440.1L1193.4 536.8 M1315.4 434.9L1189.4 531.7 M1311.4 429.8L1185.5 526.5 M1307.5 424.6L1181.5 521.4 M1303.5 419.5L1177.5 516.2 M1299.5 414.3L1173.6 511.1 M1295.6 409.1L1169.6 505.9 M1291.6 404.0L1165.7 500.8 M1287.7 398.8L1161.7 495.6 M1283.7 393.7L1157.7 490.5 M1279.7 388.5L1153.8 485.3 M1275.8 383.4L1149.8 480.1 M1271.8 378.2L1145.9 475.0 M1267.9 373.1L1141.9 469.8 M1263.9 367.9L1137.9 464.7 M1259.9 362.8L1134.0 459.5 M1256.0 357.6L1130.0 454.4 M1252.0 352.4L1126.1 449.2 M1248.1 347.3L1122.1 444.1" fill="none" stroke="#a4a4a4" stroke-width="2.4" opacity="1"/>
<path clip-path="url(#c9)" d="M1195.4 350.1L1338.0 420.0 M1190.5 360.0L1333.2 429.9 M1185.7 369.9L1328.3 439.8 M1180.8 379.8L1323.5 449.7 M1176.0 389.6L1318.6 459.5 M1171.2 399.5L1313.8 469.4 M1166.3 409.4L1309.0 479.3 M1161.5 419.3L1304.1 489.2 M1156.6 429.1L1299.3 499.0 M1151.8 439.0L1294.4 508.9 M1147.0 448.9L1289.6 518.8 M1142.1 458.8L1284.8 528.7 M1137.3 468.7L1279.9 538.6 M1132.4 478.5L1275.1 548.4 M1127.6 488.4L1270.2 558.3" fill="none" stroke="#a4a4a4" stroke-width="1.2" opacity="1"/>
<path clip-path="url(#c10)" d="M1126.1 418.3L1269.8 350.7 M1132.9 432.8L1276.6 365.2 M1139.7 447.3L1283.4 379.7 M1146.5 461.7L1290.2 394.2 M1153.3 476.2L1297.0 408.7 M1160.1 490.7L1303.9 423.1 M1166.9 505.2L1310.7 437.6 M1173.7 519.7L1317.5 452.1 M1180.5 534.1L1324.3 466.6 M1187.3 548.6L1331.1 481.1" fill="none" stroke="#a4a4a4" stroke-width="1.6" opacity="1"/>
<polygon points="1233.3,407.0 1157.8,465.0 1162.0,470.0 1238.0,411.0" fill="none" stroke="#a4a4a4" stroke-width="1.2"/>
<line x1="1233.3" y1="407.0" x2="1157.8" y2="465.0" stroke="#a4a4a4" stroke-width="2"/>
<line x1="1244.0" y1="415.0" x2="1170.0" y2="472.0" stroke="#a4a4a4" stroke-width="2.4"/>
<path clip-path="url(#c11)" d="M1375.8 432.3L1375.8 631.1 M1370.6 432.3L1370.6 631.1 M1364.9 432.3L1364.9 631.1 M1360.8 432.3L1360.8 631.1 M1355.7 432.3L1355.7 631.1 M1350.5 432.3L1350.5 631.1 M1346.4 432.3L1346.4 631.1 M1340.7 432.3L1340.7 631.1 M1335.5 432.3L1335.5 631.1 M1330.1 432.3L1330.1 631.1 M1326.5 432.3L1326.5 631.1 M1321.1 432.3L1321.1 631.1 M1316.5 432.3L1316.5 631.1 M1310.1 432.3L1310.1 631.1 M1305.3 432.3L1305.3 631.1 M1301.6 432.3L1301.6 631.1 M1294.8 432.3L1294.8 631.1 M1289.8 432.3L1289.8 631.1 M1285.4 432.3L1285.4 631.1 M1280.5 432.3L1280.5 631.1 M1276.4 432.3L1276.4 631.1 M1271.7 432.3L1271.7 631.1 M1265.7 432.3L1265.7 631.1 M1261.6 432.3L1261.6 631.1 M1256.3 432.3L1256.3 631.1 M1251.2 432.3L1251.2 631.1 M1246.7 432.3L1246.7 631.1 M1240.8 432.3L1240.8 631.1 M1235.8 432.3L1235.8 631.1 M1230.0 432.3L1230.0 631.1 M1225.7 432.3L1225.7 631.1 M1220.4 432.3L1220.4 631.1 M1215.7 432.3L1215.7 631.1 M1210.4 432.3L1210.4 631.1 M1205.8 432.3L1205.8 631.1 M1201.2 432.3L1201.2 631.1 M1194.7 432.3L1194.7 631.1 M1189.7 432.3L1189.7 631.1 M1185.0 432.3L1185.0 631.1 M1180.3 432.3L1180.3 631.1" fill="none" stroke="#a4a4a4" stroke-width="1.8" opacity="1"/>
<path clip-path="url(#c12)" d="M1143.9 483.7L1323.9 399.1 M1146.6 489.4L1326.5 404.8 M1149.5 495.4L1329.4 410.8 M1152.0 500.9L1331.9 416.3 M1155.4 508.0L1335.3 423.5 M1157.8 513.2L1337.7 428.7 M1161.0 519.9L1340.9 435.4 M1163.4 525.0L1343.3 440.4 M1166.6 531.9L1346.5 447.3 M1169.3 537.6L1349.2 453.0 M1171.3 541.9L1351.2 457.4 M1174.3 548.2L1354.2 463.6 M1177.6 555.3L1357.5 470.8 M1180.0 560.4L1359.9 475.9 M1183.2 567.2L1363.1 482.7 M1185.5 572.0L1365.4 487.5 M1188.0 577.3L1367.9 492.8 M1191.2 584.2L1371.1 499.7 M1194.1 590.4L1374.0 505.8 M1196.4 595.3L1376.3 510.8 M1199.1 600.9L1379.0 516.3 M1202.0 607.2L1381.9 522.7 M1205.3 614.3L1385.2 529.7 M1207.9 619.8L1387.8 535.2 M1210.1 624.5L1390.0 539.9 M1213.0 630.6L1392.9 546.0 M1215.7 636.2L1395.6 551.7 M1218.4 642.0L1398.3 557.5 M1221.8 649.2L1401.7 564.7 M1224.0 654.0L1403.9 569.5 M1227.1 660.6L1407.0 576.0" fill="none" stroke="#a4a4a4" stroke-width="1.8" opacity="1"/>
<path clip-path="url(#c13)" d="M1230.9 398.6L1409.4 486.1 M1227.6 405.3L1406.1 492.8 M1223.6 413.5L1402.1 500.9 M1220.6 419.6L1399.1 507.0 M1216.6 427.7L1395.1 515.1 M1213.6 433.9L1392.1 521.4 M1209.8 441.6L1388.3 529.1 M1206.4 448.5L1384.9 535.9 M1202.9 455.7L1381.4 543.2 M1198.7 464.2L1377.2 551.6 M1195.3 471.1L1373.9 558.5 M1192.3 477.4L1370.8 564.8 M1188.2 485.6L1366.7 573.0 M1185.3 491.6L1363.8 579.0 M1181.6 499.1L1360.1 586.5 M1177.7 507.1L1356.2 594.5 M1174.4 513.9L1352.9 601.3 M1171.3 520.1L1349.8 607.6 M1167.0 528.9L1345.5 616.3 M1164.2 534.7L1342.7 622.1 M1160.6 541.9L1339.1 629.4 M1156.7 550.0L1335.2 637.5 M1153.5 556.4L1332.0 643.9 M1150.0 563.5L1328.5 651.0 M1146.7 570.3L1325.2 657.8" fill="none" stroke="#a4a4a4" stroke-width="1.4" opacity="1"/>
<path clip-path="url(#c14)" d="M1150.8 511.4L1265.6 408.1 M1154.1 515.1L1268.9 411.8 M1157.4 518.9L1272.3 415.5 M1160.8 522.6L1275.6 419.2 M1164.1 526.3L1279.0 423.0 M1167.5 530.0L1282.3 426.7 M1170.8 533.7L1285.6 430.4 M1174.2 537.4L1289.0 434.1 M1177.5 541.2L1292.3 437.8 M1180.9 544.9L1295.7 441.5 M1184.2 548.6L1299.0 445.3 M1187.5 552.3L1302.4 449.0 M1190.9 556.0L1305.7 452.7 M1194.2 559.7L1309.1 456.4 M1197.6 563.5L1312.4 460.1 M1200.9 567.2L1315.7 463.8 M1204.3 570.9L1319.1 467.6 M1207.6 574.6L1322.4 471.3 M1211.0 578.3L1325.8 475.0 M1214.3 582.0L1329.1 478.7 M1217.7 585.8L1332.5 482.4 M1221.0 589.5L1335.8 486.1 M1224.3 593.2L1339.2 489.9 M1227.7 596.9L1342.5 493.6 M1231.0 600.6L1345.9 497.3 M1234.4 604.3L1349.2 501.0 M1237.7 608.1L1352.5 504.7 M1241.1 611.8L1355.9 508.4 M1244.4 615.5L1359.2 512.2 M1247.8 619.2L1362.6 515.9 M1251.1 622.9L1365.9 519.6" fill="none" stroke="#a4a4a4" stroke-width="2.4" opacity="1"/>
<path clip-path="url(#c15)" d="M1199.6 424.7L1351.0 455.0 M1197.4 435.4L1348.9 465.7 M1195.9 442.9L1347.4 473.2 M1193.9 453.2L1345.3 483.5 M1192.3 461.1L1343.8 491.4 M1190.5 470.2L1341.9 500.5 M1188.3 481.0L1339.8 511.3 M1186.9 488.0L1338.4 518.3 M1185.1 497.2L1336.5 527.5 M1183.1 507.1L1334.5 537.4 M1181.8 513.3L1333.3 543.6 M1180.1 522.0L1331.6 552.3 M1177.7 533.8L1329.2 564.1 M1176.0 542.3L1327.5 572.6 M1174.7 548.9L1326.2 579.1 M1173.0 557.4L1324.5 587.7 M1170.8 568.4L1322.3 598.7 M1168.9 578.0L1320.4 608.3" fill="none" stroke="#a4a4a4" stroke-width="1.8" opacity="1"/>
<path clip-path="url(#c16)" d="M1355.3 505.8L1355.3 654.2 M1346.8 505.8L1346.8 654.2 M1339.9 505.8L1339.9 654.2 M1333.5 505.8L1333.5 654.2 M1326.8 505.8L1326.8 654.2 M1320.5 505.8L1320.5 654.2 M1313.6 505.8L1313.6 654.2 M1304.8 505.8L1304.8 654.2 M1299.2 505.8L1299.2 654.2 M1291.3 505.8L1291.3 654.2 M1285.2 505.8L1285.2 654.2 M1277.0 505.8L1277.0 654.2 M1270.5 505.8L1270.5 654.2 M1264.1 505.8L1264.1 654.2 M1257.3 505.8L1257.3 654.2 M1249.2 505.8L1249.2 654.2 M1243.5 505.8L1243.5 654.2 M1236.2 505.8L1236.2 654.2 M1228.6 505.8L1228.6 654.2 M1221.0 505.8L1221.0 654.2 M1214.4 505.8L1214.4 654.2 M1208.1 505.8L1208.1 654.2" fill="none" stroke="#a4a4a4" stroke-width="1.3" opacity="1"/>
<path clip-path="url(#c17)" d="M1246.5 480.8L1379.7 546.0 M1242.1 489.7L1375.3 555.0 M1237.7 498.7L1370.9 564.0 M1233.3 507.7L1366.5 573.0 M1228.9 516.7L1362.1 581.9 M1224.5 525.7L1357.7 590.9 M1220.1 534.6L1353.3 599.9 M1215.7 543.6L1348.9 608.9 M1211.3 552.6L1344.5 617.9 M1206.9 561.6L1340.1 626.8 M1202.5 570.6L1335.7 635.8 M1198.1 579.5L1331.3 644.8 M1193.7 588.5L1326.9 653.8 M1189.3 597.5L1322.5 662.8 M1184.9 606.5L1318.1 671.7" fill="none" stroke="#a4a4a4" stroke-width="1.1" opacity="1"/>
<path clip-path="url(#c18)" d="M1181.8 544.4L1316.1 481.3 M1186.9 555.3L1321.2 492.2 M1192.0 566.1L1326.3 503.0 M1197.1 577.0L1331.4 513.9 M1202.2 587.9L1336.5 524.8 M1207.3 598.7L1341.6 535.6 M1212.4 609.6L1346.7 546.5 M1217.5 620.4L1351.8 557.3 M1222.7 631.3L1356.9 568.2 M1227.8 642.2L1362.0 579.1 M1232.9 653.0L1367.1 589.9 M1238.0 663.9L1372.2 600.8 M1243.1 674.7L1377.3 611.6" fill="none" stroke="#a4a4a4" stroke-width="1.1" opacity="1"/>
<polygon points="1133.6,488.3 1176.0,470.8 1250.0,505.0 1203.0,523.0 1133.6,488.3" fill="none" stroke="#a4a4a4" stroke-width="2.4"/>
<polygon points="1145.0,490.0 1178.0,476.0 1235.0,503.0 1203.0,516.0" fill="none" stroke="#a4a4a4" stroke-width="1"/>
<line x1="1133.6" y1="488.3" x2="1135.6" y2="545.4" stroke="#a4a4a4" stroke-width="1"/>
<line x1="1203.0" y1="523.0" x2="1203.3" y2="568.6" stroke="#a4a4a4" stroke-width="1"/>
<line x1="1135.6" y1="545.4" x2="1203.3" y2="568.6" stroke="#a4a4a4" stroke-width="1"/>
<line x1="1137.0" y1="541.0" x2="1203.0" y2="563.0" stroke="#a4a4a4" stroke-width="1"/>
<line x1="1135.6" y1="545.4" x2="1176.0" y2="528.0" stroke="#a4a4a4" stroke-width="1"/>
<line x1="1176.0" y1="470.8" x2="1176.0" y2="528.0" stroke="#a4a4a4" stroke-width="1"/>
<path clip-path="url(#c19)" d="M1247.5 455.2L1247.5 590.9 M1238.5 455.2L1238.5 590.9 M1229.5 455.2L1229.5 590.9 M1220.5 455.2L1220.5 590.9 M1211.5 455.2L1211.5 590.9 M1202.5 455.2L1202.5 590.9 M1193.5 455.2L1193.5 590.9 M1184.5 455.2L1184.5 590.9 M1175.5 455.2L1175.5 590.9 M1166.5 455.2L1166.5 590.9 M1157.5 455.2L1157.5 590.9 M1148.5 455.2L1148.5 590.9 M1139.5 455.2L1139.5 590.9 M1130.5 455.2L1130.5 590.9 M1121.5 455.2L1121.5 590.9 M1112.5 455.2L1112.5 590.9" fill="none" stroke="#a4a4a4" stroke-width="1" opacity="1"/>
<path clip-path="url(#c20)" d="M1253.9 466.8L1253.9 583.7 M1249.9 466.8L1249.9 583.7 M1245.9 466.8L1245.9 583.7 M1241.9 466.8L1241.9 583.7 M1237.9 466.8L1237.9 583.7 M1233.9 466.8L1233.9 583.7 M1229.9 466.8L1229.9 583.7 M1225.9 466.8L1225.9 583.7 M1221.9 466.8L1221.9 583.7 M1217.9 466.8L1217.9 583.7 M1213.9 466.8L1213.9 583.7 M1209.9 466.8L1209.9 583.7 M1205.9 466.8L1205.9 583.7 M1201.9 466.8L1201.9 583.7 M1197.9 466.8L1197.9 583.7 M1193.9 466.8L1193.9 583.7 M1189.9 466.8L1189.9 583.7 M1185.9 466.8L1185.9 583.7 M1181.9 466.8L1181.9 583.7 M1177.9 466.8L1177.9 583.7 M1173.9 466.8L1173.9 583.7 M1169.9 466.8L1169.9 583.7 M1165.9 466.8L1165.9 583.7 M1161.9 466.8L1161.9 583.7 M1157.9 466.8L1157.9 583.7 M1153.9 466.8L1153.9 583.7 M1149.9 466.8L1149.9 583.7 M1145.9 466.8L1145.9 583.7 M1141.9 466.8L1141.9 583.7 M1137.9 466.8L1137.9 583.7" fill="none" stroke="#a4a4a4" stroke-width="1.4" opacity="1"/>
<path clip-path="url(#c21)" d="M1168.7 447.1L1273.7 498.5 M1165.2 454.2L1270.2 505.7 M1161.7 461.4L1266.6 512.9 M1158.2 468.6L1263.1 520.0 M1154.7 475.8L1259.6 527.2 M1151.1 483.0L1256.1 534.4 M1147.6 490.2L1252.6 541.6 M1144.1 497.4L1249.0 548.8 M1140.6 504.5L1245.5 556.0 M1137.1 511.7L1242.0 563.1 M1133.5 518.9L1238.5 570.3 M1130.0 526.1L1235.0 577.5 M1126.5 533.3L1231.4 584.7 M1123.0 540.5L1227.9 591.9 M1119.5 547.6L1224.4 599.1" fill="none" stroke="#a4a4a4" stroke-width="1.2" opacity="1"/>
<polygon points="1138.0,507.0 1148.0,503.0 1148.0,525.0 1138.0,529.0" fill="none" stroke="#a4a4a4" stroke-width="1.6"/>
<polygon points="1140.0,509.0 1146.0,506.5 1146.0,523.0 1140.0,526.0" fill="none" stroke="#a4a4a4" stroke-width="1"/>
<polygon points="1183.0,553.0 1200.0,549.0 1200.0,572.0 1183.0,576.0" fill="none" stroke="#a4a4a4" stroke-width="1"/>
<path clip-path="url(#c22)" d="M1378.3 487.0L1378.3 684.5 M1370.3 487.0L1370.3 684.5 M1362.3 487.0L1362.3 684.5 M1354.3 487.0L1354.3 684.5 M1346.3 487.0L1346.3 684.5 M1338.3 487.0L1338.3 684.5 M1330.3 487.0L1330.3 684.5 M1322.3 487.0L1322.3 684.5 M1314.3 487.0L1314.3 684.5 M1306.3 487.0L1306.3 684.5 M1298.3 487.0L1298.3 684.5 M1290.3 487.0L1290.3 684.5 M1282.3 487.0L1282.3 684.5 M1274.3 487.0L1274.3 684.5 M1266.3 487.0L1266.3 684.5 M1258.3 487.0L1258.3 684.5 M1250.3 487.0L1250.3 684.5 M1242.3 487.0L1242.3 684.5 M1234.3 487.0L1234.3 684.5 M1226.3 487.0L1226.3 684.5 M1218.3 487.0L1218.3 684.5 M1210.3 487.0L1210.3 684.5 M1202.3 487.0L1202.3 684.5 M1194.3 487.0L1194.3 684.5 M1186.3 487.0L1186.3 684.5" fill="none" stroke="#a4a4a4" stroke-width="1" opacity="1"/>
<path clip-path="url(#c23)" d="M1234.4 453.7L1411.7 540.5 M1229.1 464.4L1406.4 551.3 M1223.8 475.2L1401.1 562.1 M1218.5 486.0L1395.9 572.9 M1213.3 496.8L1390.6 583.6 M1208.0 507.5L1385.3 594.4 M1202.7 518.3L1380.0 605.2 M1197.4 529.1L1374.7 616.0 M1192.1 539.9L1369.5 626.8 M1186.9 550.6L1364.2 637.5 M1181.6 561.4L1358.9 648.3 M1176.3 572.2L1353.6 659.1 M1171.0 583.0L1348.3 669.9 M1165.7 593.7L1343.1 680.6 M1160.5 604.5L1337.8 691.4 M1155.2 615.3L1332.5 702.2 M1149.9 626.1L1327.2 713.0" fill="none" stroke="#a4a4a4" stroke-width="1" opacity="1"/>
<path clip-path="url(#c24)" d="M1488.2 416.1L1488.2 588.4 M1480.2 416.1L1480.2 588.4 M1472.2 416.1L1472.2 588.4 M1464.2 416.1L1464.2 588.4 M1456.2 416.1L1456.2 588.4 M1448.2 416.1L1448.2 588.4 M1440.2 416.1L1440.2 588.4 M1432.2 416.1L1432.2 588.4 M1424.2 416.1L1424.2 588.4 M1416.2 416.1L1416.2 588.4 M1408.2 416.1L1408.2 588.4 M1400.2 416.1L1400.2 588.4 M1392.2 416.1L1392.2 588.4 M1384.2 416.1L1384.2 588.4 M1376.2 416.1L1376.2 588.4 M1368.2 416.1L1368.2 588.4 M1360.2 416.1L1360.2 588.4 M1352.2 416.1L1352.2 588.4 M1344.2 416.1L1344.2 588.4 M1336.2 416.1L1336.2 588.4 M1328.2 416.1L1328.2 588.4 M1320.2 416.1L1320.2 588.4" fill="none" stroke="#a4a4a4" stroke-width="1" opacity="1"/>
<path clip-path="url(#c25)" d="M1429.4 457.1L1429.4 559.3 M1425.4 457.1L1425.4 559.3 M1421.4 457.1L1421.4 559.3 M1417.4 457.1L1417.4 559.3 M1413.4 457.1L1413.4 559.3 M1409.4 457.1L1409.4 559.3 M1405.4 457.1L1405.4 559.3 M1401.4 457.1L1401.4 559.3 M1397.4 457.1L1397.4 559.3 M1393.4 457.1L1393.4 559.3 M1389.4 457.1L1389.4 559.3 M1385.4 457.1L1385.4 559.3 M1381.4 457.1L1381.4 559.3 M1377.4 457.1L1377.4 559.3 M1373.4 457.1L1373.4 559.3 M1369.4 457.1L1369.4 559.3 M1365.4 457.1L1365.4 559.3 M1361.4 457.1L1361.4 559.3 M1357.4 457.1L1357.4 559.3 M1353.4 457.1L1353.4 559.3 M1349.4 457.1L1349.4 559.3 M1345.4 457.1L1345.4 559.3 M1341.4 457.1L1341.4 559.3 M1337.4 457.1L1337.4 559.3 M1333.4 457.1L1333.4 559.3 M1329.4 457.1L1329.4 559.3" fill="none" stroke="#a4a4a4" stroke-width="1.6" opacity="1"/>
<path clip-path="url(#c26)" d="M1344.0 442.9L1454.5 497.0 M1340.1 451.0L1450.5 505.1 M1336.1 459.1L1446.6 513.2 M1332.1 467.1L1442.6 521.3 M1328.2 475.2L1438.7 529.4 M1324.2 483.3L1434.7 537.4 M1320.3 491.4L1430.7 545.5 M1316.3 499.5L1426.8 553.6 M1312.3 507.6L1422.8 561.7 M1308.4 515.6L1418.9 569.8 M1304.4 523.7L1414.9 577.8 M1300.5 531.8L1410.9 585.9 M1296.5 539.9L1407.0 594.0 M1292.5 548.0L1403.0 602.1" fill="none" stroke="#a4a4a4" stroke-width="1.2" opacity="1"/>
<line x1="1444.0" y1="456.0" x2="1444.0" y2="485.0" stroke="#a4a4a4" stroke-width="1"/>
<line x1="1452.0" y1="453.4" x2="1452.0" y2="495.0" stroke="#a4a4a4" stroke-width="1"/>
<polyline points="1416.0,470.0 1477.7,512.5 1393.0,556.0 1370.7,565.7" fill="none" stroke="#a4a4a4" stroke-width="1"/>
<polyline points="1420.0,474.0 1471.0,512.5 1393.0,552.0" fill="none" stroke="#a4a4a4" stroke-width="1"/>
<line x1="1408.0" y1="470.0" x2="1408.0" y2="500.0" stroke="#a4a4a4" stroke-width="1"/>
<line x1="1416.0" y1="475.5" x2="1416.0" y2="504.0" stroke="#a4a4a4" stroke-width="1"/>
<line x1="1424.0" y1="481.0" x2="1424.0" y2="508.0" stroke="#a4a4a4" stroke-width="1"/>
<line x1="1432.0" y1="486.6" x2="1432.0" y2="512.1" stroke="#a4a4a4" stroke-width="1"/>
<line x1="1440.0" y1="492.1" x2="1440.0" y2="516.1" stroke="#a4a4a4" stroke-width="1"/>
<line x1="1448.0" y1="497.6" x2="1448.0" y2="520.1" stroke="#a4a4a4" stroke-width="1"/>
<line x1="1456.0" y1="503.1" x2="1456.0" y2="524.1" stroke="#a4a4a4" stroke-width="1"/>
<line x1="1464.0" y1="508.6" x2="1464.0" y2="528.1" stroke="#a4a4a4" stroke-width="1"/>
<line x1="1472.0" y1="514.2" x2="1472.0" y2="532.2" stroke="#a4a4a4" stroke-width="1"/>
<polyline points="1404.0,476.0 1470.0,521.0" fill="none" stroke="#a4a4a4" stroke-width="1"/>
<polyline points="1390.0,500.0 1450.0,493.0 1448.0,498.0" fill="none" stroke="#a4a4a4" stroke-width="1"/>
<polygon points="1389.0,522.0 1399.0,518.0 1399.0,550.0 1389.0,554.0" fill="none" stroke="#a4a4a4" stroke-width="2.2"/>
<polyline points="1372.0,536.0 1425.0,512.0" fill="none" stroke="#a4a4a4" stroke-width="1.4"/>
<polygon points="1313.3,554.8 1371.1,583.7 1290.0,619.3 1234.6,593.8" fill="none" stroke="#000" stroke-width="1.1"/>
<polyline points="1313.3,559.3 1364.6,585.0 1290.0,614.8 1243.0,597.5 1313.3,559.3" fill="none" stroke="#000" stroke-width="1.1"/>
<polyline points="1234.6,633.3 1313.3,594.3 1371.1,623.2 1290.0,658.8" fill="none" stroke="#000" stroke-width="2.2"/>
<polyline points="1234.6,633.3 1290.0,658.8" fill="none" stroke="#000" stroke-width="1.1"/>
<polyline points="1243.0,635.0 1313.3,599.8 1364.6,623.5 1290.0,654.3" fill="none" stroke="#000" stroke-width="1.1"/>
<polyline points="1313.3,554.8 1313.3,594.3" fill="none" stroke="#000" stroke-width="1.1"/>
<polyline points="1371.1,583.7 1371.1,623.2" fill="none" stroke="#000" stroke-width="1.1"/>
<polyline points="1290.0,619.3 1290.0,658.8" fill="none" stroke="#000" stroke-width="1.1"/>
<polyline points="1234.6,593.8 1234.6,633.3" fill="none" stroke="#000" stroke-width="1.1"/>
<polyline points="1364.6,585.0 1364.6,624.5" fill="none" stroke="#000" stroke-width="1.1"/>
<polyline points="1290.0,619.3 1290.0,662.0" fill="none" stroke="#000" stroke-width="1.1"/>
<polyline points="1281.0,624.0 1281.0,658.0" fill="none" stroke="#000" stroke-width="1.1"/>
<polyline points="1281.0,658.0 1290.0,662.0 1296.0,659.0" fill="none" stroke="#000" stroke-width="1.1"/>
<polygon points="1245.0,606.5 1284.0,626.0 1284.0,656.8 1245.0,633.5" fill="none" stroke="#000" stroke-width="2"/>
<polyline points="1242.0,603.0 1242.0,633.5" fill="none" stroke="#000" stroke-width="1.6"/>
<polyline points="1245.0,613.3 1284.0,633.7" fill="none" stroke="#000" stroke-width="1.8"/>
<polyline points="1245.0,620.1 1284.0,641.4" fill="none" stroke="#000" stroke-width="1.8"/>
<polyline points="1245.0,626.9 1284.0,649.1" fill="none" stroke="#000" stroke-width="1.8"/>
<polyline points="1247.0,608.5 1282.0,626.0" fill="none" stroke="#000" stroke-width="2.4"/>
<polyline points="1250.0,622.0 1278.0,640.0" fill="none" stroke="#000" stroke-width="0.8"/>
<polyline points="1250.0,630.0 1278.0,645.0" fill="none" stroke="#000" stroke-width="0.8"/>
<polyline points="1180.5,614.0 1227.0,591.5 1227.0,632.0 1180.5,658.3" fill="none" stroke="#000" stroke-width="1.1"/>
<polyline points="1181.7,617.0 1227.0,595.0" fill="none" stroke="#000" stroke-width="1.1"/>
<polyline points="1181.7,655.0 1227.0,629.0" fill="none" stroke="#000" stroke-width="1.1"/>
<polyline points="1227.0,591.5 1233.0,594.0 1233.0,635.0" fill="none" stroke="#000" stroke-width="1.1"/>
<polyline points="1233.0,594.0 1240.5,596.0 1240.5,637.0 1233.0,635.0 1227.0,632.0" fill="none" stroke="#000" stroke-width="1.1"/>
<polyline points="1240.5,637.0 1245.0,639.0" fill="none" stroke="#000" stroke-width="1.1"/>
<polyline points="1158.8,608.0 1164.8,605.8 1181.7,614.8 1176.0,617.0 1158.8,608.0" fill="none" stroke="#000" stroke-width="1.1"/>
<polyline points="1158.8,608.0 1158.8,650.0 1176.0,659.0 1181.7,656.5 1181.7,614.8" fill="none" stroke="#000" stroke-width="1.1"/>
<polyline points="1176.0,617.0 1176.0,659.0" fill="none" stroke="#000" stroke-width="1.1"/>
<polyline points="1164.8,605.8 1164.8,647.0 1158.8,650.0" fill="none" stroke="#000" stroke-width="1.1"/>
<polyline points="1164.8,647.0 1176.0,653.0" fill="none" stroke="#000" stroke-width="1.1"/>
<polyline points="1124.3,642.5 1164.8,626.8" fill="none" stroke="#000" stroke-width="1.1"/>
<polyline points="1130.3,645.0 1164.8,631.0" fill="none" stroke="#000" stroke-width="1.1"/>
<polyline points="1124.3,642.5 1130.3,645.0 1130.3,685.3 1124.3,682.3 1124.3,642.5" fill="none" stroke="#000" stroke-width="1.1"/>
<polyline points="1130.3,685.3 1164.8,668.0 1164.8,626.8" fill="none" stroke="#000" stroke-width="1.1"/>
<polyline points="1124.3,682.3 1158.8,665.0" fill="none" stroke="#000" stroke-width="1.1"/>
<polyline points="1135.5,620.0 1141.5,617.8 1158.8,626.0 1153.0,628.5 1135.5,620.0" fill="none" stroke="#000" stroke-width="1.1"/>
<polyline points="1135.5,620.0 1135.5,660.5 1153.0,669.5 1153.0,628.5" fill="none" stroke="#000" stroke-width="1.1"/>
<polyline points="1141.5,617.8 1141.5,657.0 1153.0,663.0" fill="none" stroke="#000" stroke-width="1.1"/>
<polyline points="1158.8,626.0 1158.8,665.0" fill="none" stroke="#000" stroke-width="1.1"/>
<polyline points="1135.5,660.5 1141.5,657.0" fill="none" stroke="#000" stroke-width="1.1"/>
<path d="M1184.500 676 C1183 670 1190 664 1199 658 C1210 650 1220 643.500 1227 644 C1236 645 1244 652 1245 659 C1246 664 1243 668 1238 671 L1236 674 L1233.500 672.500 L1213 684 L1212 687.500 L1206 687.500 C1198 688 1188 683 1184.500 676Z" fill="#000"/>
<rect x="1200.2" y="671.3" width="1" height="1" fill="#fff"/>
<rect x="1193.0" y="678.6" width="1" height="0.7" fill="#fff"/>
<rect x="1196.9" y="681.1" width="1" height="0.7" fill="#fff"/>
<rect x="1236.2" y="657.2" width="1" height="1" fill="#fff"/>
<rect x="1226.5" y="660.4" width="0.7" height="0.7" fill="#fff"/>
<rect x="1208.4" y="666.7" width="1.4" height="0.7" fill="#fff"/>
<rect x="1235.8" y="655.2" width="1.4" height="1" fill="#fff"/>
<rect x="1233.6" y="657.8" width="0.7" height="1" fill="#fff"/>
<rect x="1221.2" y="664.8" width="1.4" height="0.7" fill="#fff"/>
<rect x="1234.0" y="663.1" width="1" height="1" fill="#fff"/>
<rect x="1231.9" y="652.8" width="1.4" height="0.7" fill="#fff"/>
<rect x="1194.4" y="675.0" width="1.4" height="0.7" fill="#fff"/>
<rect x="1220.7" y="674.8" width="1" height="0.7" fill="#fff"/>
<rect x="1197.2" y="683.9" width="1.4" height="0.7" fill="#fff"/>
<rect x="1207.1" y="683.4" width="1" height="0.7" fill="#fff"/>
<rect x="1223.3" y="660.2" width="1" height="0.7" fill="#fff"/>
<rect x="1209.2" y="675.9" width="1" height="0.7" fill="#fff"/>
<rect x="1214.8" y="677.0" width="0.7" height="0.7" fill="#fff"/>
<rect x="1203.8" y="671.7" width="1" height="1" fill="#fff"/>
<rect x="1200.7" y="678.1" width="1.4" height="1" fill="#fff"/>
<rect x="1225.8" y="670.2" width="1.4" height="1" fill="#fff"/>
<rect x="1231.4" y="656.6" width="1.4" height="0.7" fill="#fff"/>
<rect x="1204.1" y="674.9" width="1.4" height="0.7" fill="#fff"/>
<rect x="1210.3" y="668.1" width="1" height="0.7" fill="#fff"/>
<rect x="1229.8" y="670.3" width="0.7" height="1" fill="#fff"/>
<rect x="1216.8" y="672.2" width="1" height="0.7" fill="#fff"/>
<rect x="1200.0" y="679.7" width="0.7" height="0.7" fill="#fff"/>
<rect x="1216.7" y="661.4" width="0.7" height="1" fill="#fff"/>
<rect x="1217.0" y="677.6" width="1.4" height="0.7" fill="#fff"/>
<rect x="1229.6" y="669.0" width="0.7" height="1" fill="#fff"/>
<rect x="1226.1" y="657.2" width="1" height="0.7" fill="#fff"/>
<rect x="1235.5" y="655.9" width="1.4" height="1" fill="#fff"/>
<rect x="1222.6" y="660.8" width="1.4" height="0.7" fill="#fff"/>
<rect x="1235.0" y="667.0" width="1" height="1" fill="#fff"/>
<rect x="1225.9" y="655.3" width="1.4" height="0.7" fill="#fff"/>
<rect x="1207.1" y="674.3" width="1" height="1" fill="#fff"/>
<rect x="1235.8" y="657.4" width="1.4" height="1" fill="#fff"/>
<rect x="1214.6" y="679.1" width="0.7" height="0.7" fill="#fff"/>
<rect x="1217.9" y="674.9" width="1.4" height="0.7" fill="#fff"/>
<rect x="1232.2" y="661.2" width="1" height="1" fill="#fff"/>
<rect x="1233.5" y="661.3" width="1" height="0.7" fill="#fff"/>
<rect x="1216.2" y="671.3" width="0.7" height="1" fill="#fff"/>
<polygon points="1290.0,660.0 1296.0,663.0 1300.0,668.0 1294.0,672.0" fill="none" stroke="#a8a8a8" stroke-width=".9"/>
<polygon points="1294.0,684.0 1301.0,688.0 1297.0,698.0 1291.0,694.0" fill="none" stroke="#a8a8a8" stroke-width=".9"/>
<polygon points="1291.0,697.0 1294.0,699.0 1298.0,712.0 1296.0,713.0" fill="none" stroke="#a8a8a8" stroke-width=".9"/>
<polygon points="1369.0,675.0 1376.0,674.0 1378.0,684.0 1371.0,686.0" fill="none" stroke="#a8a8a8" stroke-width=".9"/>
<polygon points="1372.0,701.0 1387.0,716.0 1383.0,720.0 1367.0,706.0" fill="none" stroke="#a8a8a8" stroke-width=".9"/>
<polygon points="1296.0,754.0 1299.0,754.0 1303.0,768.0 1300.0,769.0" fill="none" stroke="#a8a8a8" stroke-width=".9"/>
<polygon points="1300.0,771.0 1303.0,773.0 1293.0,784.0 1290.0,783.0" fill="none" stroke="#a8a8a8" stroke-width=".9"/>
</svg>
<div class="a" style="left:1550px;top:153.5px;width:370px;height:852px;background:#f0f0f0;"></div>
<div class="a" style="left:1899px;top:153.5px;width:21px;height:852px;background:#fff;"></div>
<div class="a" style="left:1559px;top:153.700px;width:340px;height:16.300px;border:1.3px solid #4a4a4a;border-bottom:none;background:linear-gradient(#c3cfde,#d3deeb 60%,#dfe7f2);"></div>
<div class="t" style="left:1577.3px;top:154.8px;font-size:11px;line-height:15px;letter-spacing:-0.005px;color:#000;">Projects</div>
<div class="a" style="left:1559.5px;top:172px;width:339.500px;height:28.300px;background:#c4daf6;"></div>
<div class="a" style="left:1559.5px;top:172px;width:245px;height:28.300px;border-radius:3px 4px 0 0;background:linear-gradient(#d4e4fa 0px,#c3d9f7 6px,#a9c6ee 13px,#98b9e8 20px,#8fb2e4 26px,#4f7fca 27.5px,#4f7fca 28.300px);"></div>
<div class="a" style="left:1559px;top:200.300px;width:340px;height:783px;background:#fff;border:1px solid #7a7a7a;border-top-color:#6e6e6e;border-left-color:#6a6a6a;"></div>
<div class="a" style="left:1559px;top:985.5px;width:340px;height:20px;background:#fff;border-top:1px solid #808080;"></div>
<div class="a" style="left:1627.700px;top:985.5px;width:66px;height:19.500px;background:#f0f0f0;border-right:1.5px solid #555;border-bottom:1.5px solid #555;"></div>
<div class="t" style="left:1583.2px;top:988.7px;font-size:11px;line-height:15px;letter-spacing:-0.070px;color:#9b9b9b;">Catalog</div>
<div class="t" style="left:1648.5px;top:988.7px;font-size:11px;line-height:15px;letter-spacing:-0.034px;color:#000;">Projects</div>
<div class="t" style="left:1715.3px;top:988.7px;font-size:11px;line-height:15px;letter-spacing:0.025px;color:#9b9b9b;">Help</div>
<div class="t" style="left:1765.0px;top:988.7px;font-size:11px;line-height:15px;letter-spacing:0.052px;color:#9b9b9b;">Quantities</div>
<div class="a" style="left:1743px;top:989px;width:1px;height:15px;background:#8a8a8a;"></div>
<div class="a" style="left:1820px;top:989px;width:1px;height:15px;background:#8a8a8a;"></div>
<div class="t" style="left:1581.5px;top:201.8px;font-size:11px;line-height:15px;letter-spacing:-0.016px;color:#dc4f6a;">Neues Projekt2</div>
<div class="t" style="left:1635.4px;top:217.8px;font-size:11px;line-height:15px;letter-spacing:-0.230px;color:#000;">Gebäude 1</div>
<div class="t" style="left:1654.0px;top:233.8px;font-size:11px;line-height:15px;letter-spacing:0.162px;color:#000;">Garage</div>
<div class="t" style="left:1673.3px;top:249.8px;font-size:11px;line-height:15px;letter-spacing:0.177px;color:#000;">Grundriss</div>
<div class="t" style="left:1654.0px;top:265.8px;font-size:11px;line-height:15px;letter-spacing:0.041px;color:#000;">Erdgeschoss</div>
<div class="t" style="left:1673.3px;top:281.8px;font-size:11px;line-height:15px;letter-spacing:0.177px;color:#000;">Grundriss</div>
<div class="t" style="left:1673.3px;top:297.8px;font-size:11px;line-height:15px;letter-spacing:-0.016px;color:#000;">Pflanzen</div>
<div class="t" style="left:1654.0px;top:313.8px;font-size:11px;line-height:15px;letter-spacing:0.060px;color:#000;">1. Obergeschoss</div>
<div class="t" style="left:1673.3px;top:329.8px;font-size:11px;line-height:15px;letter-spacing:0.177px;color:#000;">Grundriss</div>
<div class="t" style="left:1635.4px;top:345.8px;font-size:11px;line-height:15px;letter-spacing:-0.231px;color:#dc4f6a;">Umgebung</div>
<div class="t" style="left:1600.0px;top:361.8px;font-size:11px;line-height:15px;letter-spacing:-0.036px;color:#000;">Views</div>
<div class="t" style="left:1654.0px;top:377.8px;font-size:11px;line-height:15px;letter-spacing:0.067px;color:#000;">Neues Projekt2 : Isometric View</div>
<div class="t" style="left:1654.0px;top:393.8px;font-size:11px;line-height:15px;letter-spacing:0.067px;color:#000;">Neues Projekt2 : Isometric View</div>
<div class="t" style="left:1654.0px;top:409.8px;font-size:11px;line-height:15px;letter-spacing:0.046px;color:#dc4f6a;">Neues Projekt2 : 3D-View</div>
<svg width="370" height="860" style="left:1550px;top:150px" viewBox="1550 150 370 860">
<defs><linearGradient id="pgt" x1="0" y1="0" x2="1" y2="0"><stop offset="0" stop-color="#f4f4f4"/><stop offset="1" stop-color="#c4c4c4"/></linearGradient>
<linearGradient id="exg" x1="0" y1="0" x2="1" y2="1"><stop offset="0" stop-color="#fff"/><stop offset="1" stop-color="#d8d8d8"/></linearGradient>
<linearGradient id="upg" x1="0" y1="0" x2="0" y2="1"><stop offset="0" stop-color="#6ab8d8"/><stop offset="1" stop-color="#2a7a9c"/></linearGradient>
<linearGradient id="dng" x1="0" y1="0" x2="0" y2="1"><stop offset="0" stop-color="#7ab8e0"/><stop offset="1" stop-color="#3a68b8"/></linearGradient>
<radialGradient id="pin" cx=".6" cy=".35" r=".6"><stop offset="0" stop-color="#fff"/><stop offset=".65" stop-color="#e2e2e2"/><stop offset="1" stop-color="#9a9a9a"/></radialGradient>
</defs>
<g transform="translate(1560,156.8)" fill="none" stroke="#1414c8" stroke-width="1.200"><rect x="4.600" y="0.600" width="6" height="2.600"/><path d="M7.600 3.500 V5.6 M2.300 7.8 V5.6 H13 V7.8 M7.600 5.6 V7.8" stroke-width=".9" stroke="#6a6ad8"/><rect x="0.600" y="7.8" width="3.400" height="2.900" rx=".8" fill="#fff"/><rect x="5.900" y="7.8" width="3.400" height="2.900" rx=".8" fill="#fff"/><rect x="11.200" y="7.8" width="3.400" height="2.900" rx=".8" fill="#fff"/></g>
<g><path d="M1883 169.500 L1889 163.500" stroke="#8a8a8a" stroke-width="1.600"/><ellipse cx="1889.500" cy="163" rx="5.500" ry="6.500" transform="rotate(35 1889.500 163)" fill="url(#pin)" stroke="#9a9a9a" stroke-width=".6"/><circle cx="1892" cy="160.500" r="4.300" fill="url(#pin)" stroke="#aaa" stroke-width=".5"/></g>
<path d="M1568 187 L1571.500 190.500 L1579.500 180.500" fill="none" stroke="#2a50b8" stroke-width="1.700"/>
<rect x="1590" y="179.700" width="13.300" height="11" fill="#fff" stroke="#aab4c8" stroke-width=".8"/><rect x="1590.500" y="191" width="13.500" height="1" fill="#6a84b8" opacity=".7"/>
<text x="1596.700" y="189.300" font-family="Liberation Sans,sans-serif" font-size="8.800" text-anchor="middle" fill="#000">abl</text>
<g><rect x="1613.500" y="183.500" width="10.500" height="8.500" fill="#fff" stroke="#8a9ab8" stroke-width=".8"/><path d="M1613 192.500h11.500" stroke="#555"/><path d="M1615 186.500h2M1618.500 186.500h4.500M1615 189h2M1618.500 189h4.500" stroke="#7a9ad8" stroke-width="1"/><path d="M1617 183 L1621 179 L1628 179.500 L1628.500 184 L1623 183 L1621 186Z" fill="#e8b040"/><path d="M1617.500 182.500 l3.500 -3.500 l2.500 3 l-2.500 3.500z" fill="#d8c890" stroke="#8a6a20" stroke-width=".4"/><rect x="1627.500" y="179.500" width="1.500" height="4.500" fill="#1a9a2a"/></g>
<path d="M1641.500 181.500 L1650.500 190.500 M1650.500 181.500 L1641.500 190.500" stroke="#e83848" stroke-width="3.200" stroke-linecap="round"/>
<g transform="translate(1662.5,179.5)"><path d="M.5 .5 h5.500 l2.500 2.500 v6 h-8z" fill="#dcdcdc" stroke="#9a9a9a" stroke-width=".8"/><path d="M2 3.500h3M2 5.500h5M2 7.500h5" stroke="#aaa" stroke-width=".8"/><path d="M6.500 4 h5.500 l2.500 2.500 v6.500 h-8z" fill="#dcdcdc" stroke="#9a9a9a" stroke-width=".8"/><path d="M8 7h3M8 9h5M8 11h5" stroke="#aaa" stroke-width=".8"/></g>
<g transform="translate(1686.7,179.5)"><path d="M.5 .5 h5.500 l2.500 2.500 v6 h-8z" fill="#f8fbff" stroke="#4a78c8" stroke-width=".8"/><path d="M2 3.500h3M2 5.500h5M2 7.500h5" stroke="#4a78c8" stroke-width=".8"/><path d="M6.500 4 h5.500 l2.500 2.500 v6.500 h-8z" fill="#f8fbff" stroke="#4a78c8" stroke-width=".8"/><path d="M8 7h3M8 9h5M8 11h5" stroke="#4a78c8" stroke-width=".8"/></g>
<path d="M1720 178 L1727.500 186 H1723 V192 H1717 V186 H1712.500Z" fill="url(#upg)" stroke="#5a9ac0" stroke-width=".5"/>
<path d="M1741 179 H1747 V185.500 H1752 L1744 193 L1736.500 185.500 H1741Z" fill="url(#dng)" stroke="#6a9ad0" stroke-width=".5"/>
<g transform="translate(1759.5,178)"><text x="0.300" y="6.300" font-family="Liberation Sans,sans-serif" font-weight="bold" font-size="7.500" fill="#1a4a7a">A</text><text x="10.800" y="15.500" font-family="Liberation Sans,sans-serif" font-weight="bold" font-size="7.500" fill="#000">Z</text><path d="M7 3.500 L12 8.500" stroke="#000" stroke-width="1" stroke-dasharray="1 1.300"/><path d="M1.300 9.300 L3.300 7.300 L6.300 10.300 L8.600 8 L8.600 15.300 L1.600 15.300 L3.800 13 Z" fill="#c4c8ac" stroke="#000" stroke-width="1.100" stroke-linejoin="miter"/></g>
<g transform="translate(1783.6,178)"><text x="0.300" y="6.300" font-family="Liberation Sans,sans-serif" font-weight="bold" font-size="7.500" fill="#000">Z</text><text x="10.800" y="15.500" font-family="Liberation Sans,sans-serif" font-weight="bold" font-size="7.500" fill="#1a4a7a">A</text><path d="M7 3.500 L12 8.500" stroke="#000" stroke-width="1" stroke-dasharray="1 1.300"/><path d="M1.300 9.300 L3.300 7.300 L6.300 10.300 L8.600 8 L8.600 15.300 L1.600 15.300 L3.800 13 Z" fill="#c4c8ac" stroke="#000" stroke-width="1.100" stroke-linejoin="miter"/></g>
<path d="M1705 200 l1.500 -2 l1.500 2z" fill="#eef4ff"/><path d="M1705 172 l1.500 1.800 l1.500 -1.800z" fill="#eef4ff"/>
<g stroke="#9a9a9a" stroke-width="1" stroke-dasharray="1 1" fill="none" shape-rendering="crispEdges">
<path d="M1575 208.500 H1580"/>
<path d="M1588.500 215 V364 M1594 224.500 H1599 M1590 352.500 H1599 M1594 368.500 H1599"/>
<path d="M1607.500 231 V316 M1613 240.500 H1618 M1613 272.500 H1618 M1613 320.500 H1618"/>
<path d="M1626.500 247 V256 M1627 256.500 H1637 M1626.500 279 V304 M1627 304.500 H1637 M1627 288.500 H1637 M1626.500 327 V336 M1627 336.500 H1637"/>
<path d="M1607.500 375 V416 M1608 416.500 H1618 M1608 384.500 H1618 M1608 400.500 H1618"/>
</g>
<rect x="1565.5" y="204.5" width="8" height="8" rx="1" fill="url(#exg)" stroke="#919191" stroke-width="1"/><path d="M1567.5 208.5 h4" stroke="#3a4a9a" stroke-width="1"/>
<rect x="1584.5" y="220.5" width="8" height="8" rx="1" fill="url(#exg)" stroke="#919191" stroke-width="1"/><path d="M1586.5 224.5 h4" stroke="#3a4a9a" stroke-width="1"/>
<rect x="1603.5" y="236.5" width="8" height="8" rx="1" fill="url(#exg)" stroke="#919191" stroke-width="1"/><path d="M1605.5 240.5 h4" stroke="#3a4a9a" stroke-width="1"/>
<rect x="1603.5" y="268.5" width="8" height="8" rx="1" fill="url(#exg)" stroke="#919191" stroke-width="1"/><path d="M1605.5 272.5 h4" stroke="#3a4a9a" stroke-width="1"/>
<rect x="1603.5" y="316.5" width="8" height="8" rx="1" fill="url(#exg)" stroke="#919191" stroke-width="1"/><path d="M1605.5 320.5 h4" stroke="#3a4a9a" stroke-width="1"/>
<rect x="1584.5" y="364.5" width="8" height="8" rx="1" fill="url(#exg)" stroke="#919191" stroke-width="1"/><path d="M1586.5 368.5 h4" stroke="#3a4a9a" stroke-width="1"/>
<rect x="1600" y="219.0" width="13" height="13" rx="2.200" fill="#0a5cc0"/><path d="M1603 225.7 l2.600 2.700 l4.800 -5.400" fill="none" stroke="#eef4ff" stroke-width="1"/><g transform="translate(1614,217.5)"><path d="M0 7 L4 10.500 L4 15 L0 11.500Z M8 8 L12 11 V15 L8 12Z" fill="#8ac0e8"/><path d="M4 10.500 L8 8 V12 L4 15Z M12 11 L16 7.500 V11.500 L12 15Z" fill="#4a98d8"/><path d="M0 7 L6 1 L9 0.500 L16 7.500 L12 11 L8 7 L4 10.500Z" fill="#d82838"/><path d="M9 0.500 L16 7.500 L12 11 L8 5Z" fill="#f04a5a"/></g>
<rect x="1619" y="235.0" width="13" height="13" rx="2.200" fill="#0a5cc0"/><path d="M1622 241.7 l2.600 2.700 l4.800 -5.400" fill="none" stroke="#eef4ff" stroke-width="1"/><g transform="translate(1633,234.0)"><path d="M0 5 L4 2 L6 4 L8 1 L11 3 L13 1.500 L16 5 L16 10 L12 13.500 L8 10 L4 13.500 L0 10Z" fill="#dcebf8"/><path d="M0 5 L4 8.500 L4 13.500 L0 10Z M8 5.500 L12 9 V13.500 L8 10Z" fill="#7ab4e4"/><path d="M4 8.500 L8 5.500 V10 L4 13.500Z M12 9 L16 5 V10 L12 13.500Z" fill="#4a94d8"/><path d="M0 5 L4 2 L6 4 L8 1 L11 3 L13 1.500 L16 5 L12 9 L8 5.500 L4 8.500Z" fill="#eef5fb"/></g>
<rect x="1619" y="267.0" width="13" height="13" rx="2.200" fill="#0a5cc0"/><path d="M1622 273.7 l2.600 2.700 l4.800 -5.400" fill="none" stroke="#eef4ff" stroke-width="1"/><g transform="translate(1633,266.0)"><path d="M0 5 L4 2 L6 4 L8 1 L11 3 L13 1.500 L16 5 L16 10 L12 13.500 L8 10 L4 13.500 L0 10Z" fill="#dcebf8"/><path d="M0 5 L4 8.500 L4 13.500 L0 10Z M8 5.500 L12 9 V13.500 L8 10Z" fill="#7ab4e4"/><path d="M4 8.500 L8 5.500 V10 L4 13.500Z M12 9 L16 5 V10 L12 13.500Z" fill="#4a94d8"/><path d="M0 5 L4 2 L6 4 L8 1 L11 3 L13 1.500 L16 5 L12 9 L8 5.500 L4 8.500Z" fill="#eef5fb"/></g>
<rect x="1619" y="315.0" width="13" height="13" rx="2.200" fill="#0a5cc0"/><path d="M1622 321.7 l2.600 2.700 l4.800 -5.400" fill="none" stroke="#eef4ff" stroke-width="1"/><g transform="translate(1633,314.0)"><path d="M0 5 L4 2 L6 4 L8 1 L11 3 L13 1.500 L16 5 L16 10 L12 13.500 L8 10 L4 13.500 L0 10Z" fill="#dcebf8"/><path d="M0 5 L4 8.500 L4 13.500 L0 10Z M8 5.500 L12 9 V13.500 L8 10Z" fill="#7ab4e4"/><path d="M4 8.500 L8 5.500 V10 L4 13.500Z M12 9 L16 5 V10 L12 13.500Z" fill="#4a94d8"/><path d="M0 5 L4 2 L6 4 L8 1 L11 3 L13 1.500 L16 5 L12 9 L8 5.500 L4 8.500Z" fill="#eef5fb"/></g>
<rect x="1638" y="251.0" width="13" height="13" rx="2.200" fill="#0a5cc0"/><path d="M1641 257.7 l2.600 2.700 l4.800 -5.400" fill="none" stroke="#eef4ff" stroke-width="1"/><path d="M1655.5 251.5 h6.500 l3.500 3.500 v10.500 h-10z" fill="#d8d8d8" opacity=".7"/><path d="M1654.5 250.5 h6.500 l3.500 3.500 v10.500 h-10z" fill="url(#pgt)" stroke="#c8c8c8" stroke-width=".6"/><path d="M1661 250.5 v3.500 h3.500z" fill="#fff" stroke="#c0c0c0" stroke-width=".4"/>
<rect x="1638" y="283.0" width="13" height="13" rx="2.200" fill="#0a5cc0"/><path d="M1641 289.7 l2.600 2.700 l4.800 -5.400" fill="none" stroke="#eef4ff" stroke-width="1"/><path d="M1655.5 283.5 h6.500 l3.500 3.500 v10.500 h-10z" fill="#d8d8d8" opacity=".7"/><path d="M1654.5 282.5 h6.500 l3.500 3.500 v10.500 h-10z" fill="url(#pgt)" stroke="#c8c8c8" stroke-width=".6"/><path d="M1661 282.5 v3.500 h3.500z" fill="#fff" stroke="#c0c0c0" stroke-width=".4"/>
<rect x="1638" y="299.0" width="13" height="13" rx="2.200" fill="#0a5cc0"/><path d="M1641 305.7 l2.600 2.700 l4.800 -5.400" fill="none" stroke="#eef4ff" stroke-width="1"/><path d="M1655.5 299.5 h6.500 l3.500 3.500 v10.500 h-10z" fill="#d8d8d8" opacity=".7"/><path d="M1654.5 298.5 h6.500 l3.500 3.500 v10.500 h-10z" fill="url(#pgt)" stroke="#c8c8c8" stroke-width=".6"/><path d="M1661 298.5 v3.500 h3.500z" fill="#fff" stroke="#c0c0c0" stroke-width=".4"/>
<rect x="1638" y="331.0" width="13" height="13" rx="2.200" fill="#0a5cc0"/><path d="M1641 337.7 l2.600 2.700 l4.800 -5.400" fill="none" stroke="#eef4ff" stroke-width="1"/><path d="M1655.5 331.5 h6.500 l3.500 3.500 v10.500 h-10z" fill="#d8d8d8" opacity=".7"/><path d="M1654.5 330.5 h6.500 l3.500 3.500 v10.500 h-10z" fill="url(#pgt)" stroke="#c8c8c8" stroke-width=".6"/><path d="M1661 330.5 v3.500 h3.500z" fill="#fff" stroke="#c0c0c0" stroke-width=".4"/>
<rect x="1600" y="347.0" width="13" height="13" rx="2.200" fill="#0a5cc0"/><path d="M1603 353.7 l2.600 2.700 l4.800 -5.400" fill="none" stroke="#eef4ff" stroke-width="1"/><path d="M1617.5 347.5 h6.500 l3.500 3.500 v10.500 h-10z" fill="#d8d8d8" opacity=".7"/><path d="M1616.5 346.5 h6.500 l3.500 3.500 v10.500 h-10z" fill="url(#pgt)" stroke="#c8c8c8" stroke-width=".6"/><path d="M1623 346.5 v3.500 h3.500z" fill="#fff" stroke="#c0c0c0" stroke-width=".4"/>
<rect x="1619" y="379.0" width="13" height="13" rx="2.200" fill="#0a5cc0"/><path d="M1622 385.7 l2.600 2.700 l4.800 -5.400" fill="none" stroke="#eef4ff" stroke-width="1"/><path d="M1633.5 392.0 L1648.5 378.0" stroke="#000" stroke-width="1.800"/><path d="M1643.8 377.7 H1649 V380.5z" fill="#0a0aff"/><path d="M1632.7 393.3 H1638 V388.8z" fill="#0a0aff"/>
<rect x="1619" y="395.0" width="13" height="13" rx="2.200" fill="#0a5cc0"/><path d="M1622 401.7 l2.600 2.700 l4.800 -5.400" fill="none" stroke="#eef4ff" stroke-width="1"/><path d="M1633.5 408.0 L1648.5 394.0" stroke="#000" stroke-width="1.800"/><path d="M1643.8 393.7 H1649 V396.5z" fill="#0a0aff"/><path d="M1632.7 409.3 H1638 V404.8z" fill="#0a0aff"/>
<rect x="1619" y="411.0" width="13" height="13" rx="2.200" fill="#0a5cc0"/><path d="M1622 417.7 l2.600 2.700 l4.800 -5.400" fill="none" stroke="#eef4ff" stroke-width="1"/>
<text x="1633" y="421.800" font-family="Liberation Sans,sans-serif" font-weight="bold" font-size="11.500" fill="#000" textLength="15.500" lengthAdjust="spacingAndGlyphs">3D</text>
<g transform="translate(1564,989)"><path d="M8 6 L15 0.500 L15.500 6.500 L9 11Z" fill="#8a8a8a"/><path d="M0.500 5.500 L4 3 L7 5 L9 4 L15.500 6.500 L7.500 12.500 L1.500 8Z" fill="#f4c820" stroke="#c89600" stroke-width=".5"/><path d="M9 8 L14.500 5.500 L14.800 7 L9.500 10.500Z" fill="#fff" opacity=".85"/></g>
<g transform="translate(1630,990.4)" fill="none" stroke="#1414c8" stroke-width="1.200"><rect x="4.600" y="0.600" width="6" height="2.600"/><path d="M7.600 3.500 V5.3999999999999995 M2.300 7.6 V5.3999999999999995 H13 V7.6 M7.600 5.3999999999999995 V7.6" stroke-width=".9" stroke="#6a6ad8"/><rect x="0.600" y="7.6" width="3.400" height="2.900" rx=".8" fill="#fff"/><rect x="5.900" y="7.6" width="3.400" height="2.900" rx=".8" fill="#fff"/><rect x="11.200" y="7.6" width="3.400" height="2.900" rx=".8" fill="#fff"/></g>
<circle cx="1704" cy="996" r="7.300" fill="#1a78e8"/><text x="1704" y="1000.500" font-family="Liberation Sans,sans-serif" font-weight="bold" font-size="12" text-anchor="middle" fill="#fff">?</text>
<g><path d="M1748.500 988.500 h10 l2 1.500 v13 h-12z" fill="#000"/><rect x="1747.500" y="989" width="11" height="13" fill="#fff" stroke="#000" stroke-width="1.200"/><path d="M1749.500 992h7M1749.500 994.500h7M1749.500 997h7M1749.500 999.500h5" stroke="#000" stroke-width="1"/></g>
</svg>
<div class="a" style="left:0;top:1005px;width:1920px;height:28px;background:#f0f0f0;"></div>
<div class="a" style="left:0;top:1004px;width:1550px;height:2px;background:#fff;"></div>
<div class="a" style="left:0;top:1006px;width:1920px;height:1px;background:#dcdcdc;"></div>
<div class="a" style="left:0;top:1031.400px;width:1920px;height:1.600px;background:#2e2e3e;"></div>
<div class="a" style="left:1673.5px;top:1008.5px;width:1px;height:22px;background:#d4d4d4;"></div>
<div class="a" style="left:1755px;top:1008.5px;width:1px;height:22px;background:#d4d4d4;"></div>
<div class="a" style="left:1837px;top:1008.5px;width:1px;height:22px;background:#d4d4d4;"></div>
<div class="t" style="left:1678.5px;top:1012.7px;font-size:11px;line-height:15px;letter-spacing:0.020px;color:#000;">x: 24'-4 47/64"</div>
<div class="t" style="left:1760.7px;top:1012.7px;font-size:11px;line-height:15px;letter-spacing:0.006px;color:#000;">y: 51'-1 27/64"</div>
<div class="t" style="left:1842.8px;top:1012.7px;font-size:11px;line-height:15px;letter-spacing:0.018px;color:#000;">z: 32'-8 3/4"</div>
</body></html>
